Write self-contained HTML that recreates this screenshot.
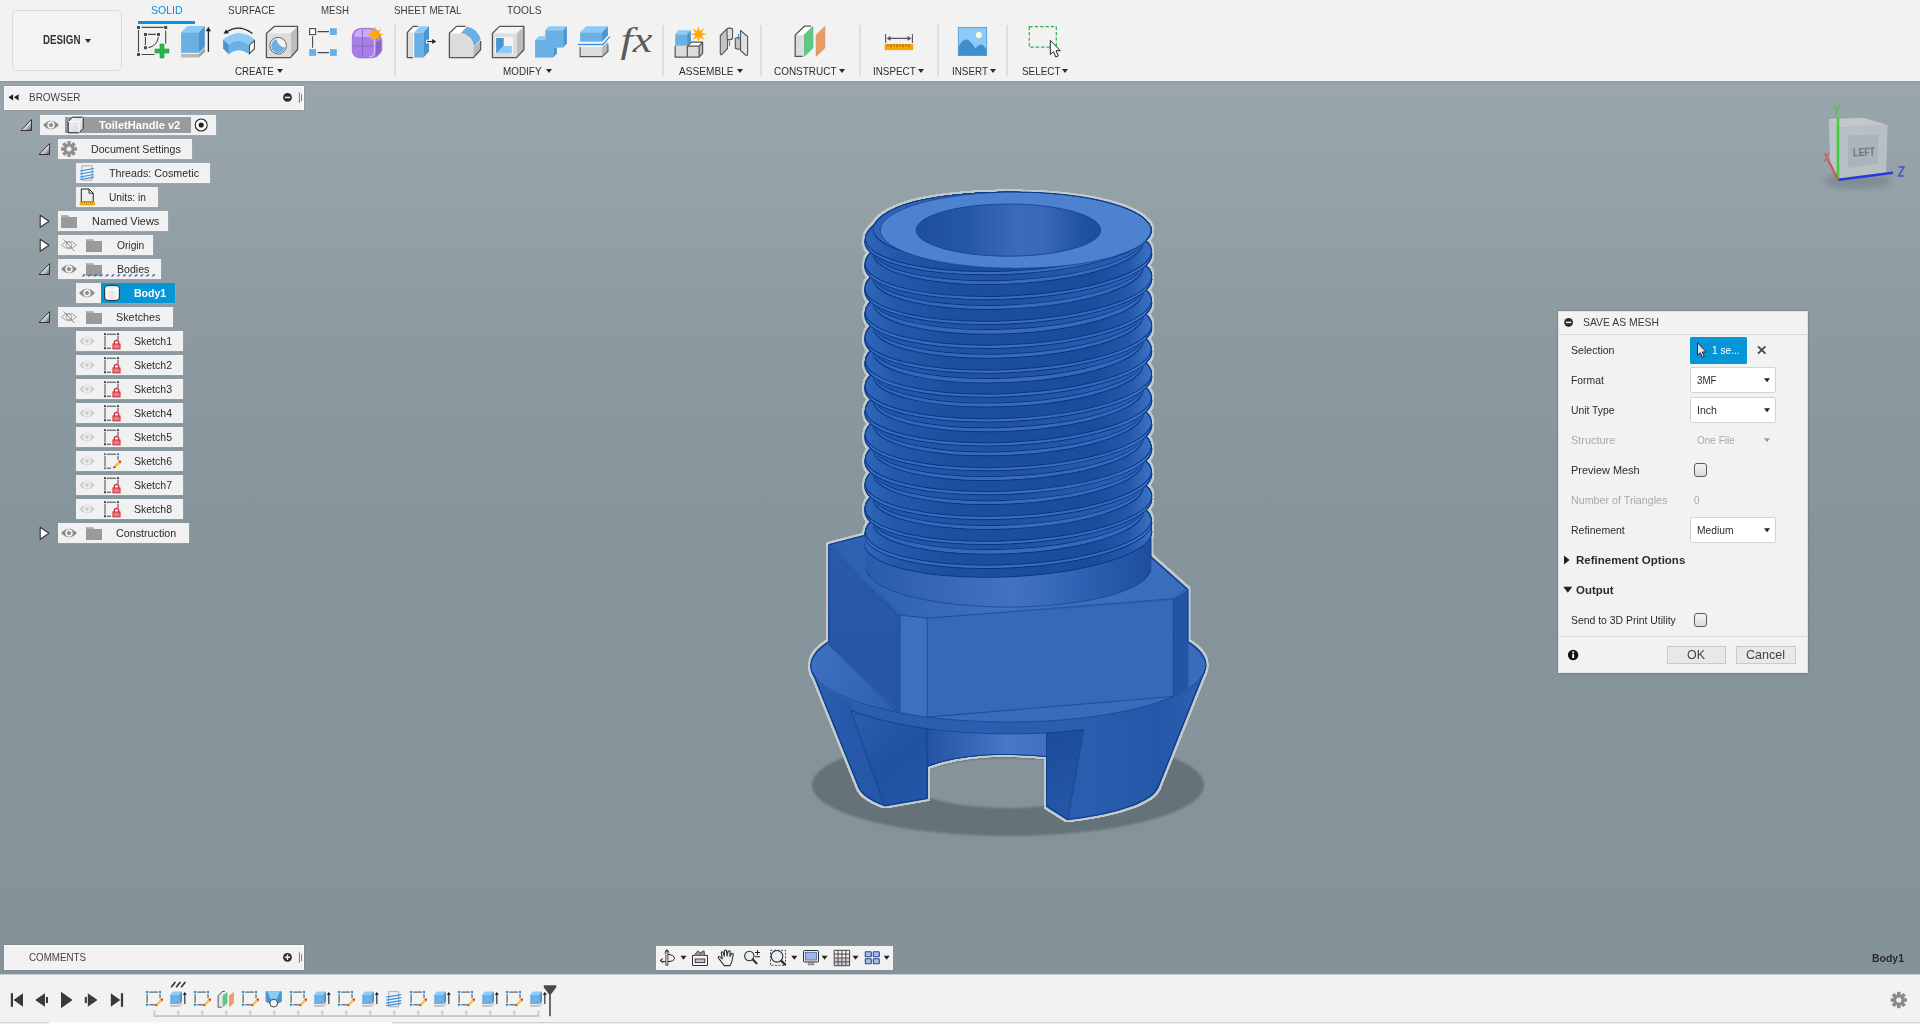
<!DOCTYPE html>
<html lang="en"><head><meta charset="utf-8"><title>Fusion 360 - ToiletHandle v2</title>
<style>
*{box-sizing:border-box;margin:0;padding:0}
html,body{width:1920px;height:1024px;overflow:hidden;background:#f2f2f2;font-family:"Liberation Sans",Arial,sans-serif;font-size:11px;color:#2a2a2a}
.abs{position:absolute}
#canvas{position:absolute;left:0;top:81px;width:1920px;height:894px;background:linear-gradient(#99a6ac 0%,#94a1a7 13%,#8e9ba1 25%,#89979e 38%,#86959c 50%,#84939a 100%);overflow:hidden}
#toolbar{position:absolute;left:0;top:0;width:1920px;height:81px;background:#f2f2f2}
#tshadow{position:absolute;left:0;top:81px;width:1920px;height:3px;background:linear-gradient(#8d9ba1,#98a6ac)}
#timeline{position:absolute;left:0;top:974px;width:1920px;height:50px;background:#f2f2f2;border-top:1.5px solid #c9cdcf}
.t{position:absolute;white-space:pre;transform-origin:0 50%;display:inline-block;line-height:14px;height:14px;font-size:11px;color:#2b2b2b}
.tab{font-size:11.5px;color:#3c3c3c}
.grp{font-size:11.5px;color:#2e2e2e}
.b{font-weight:700}
.sep{position:absolute;top:25px;width:2px;height:51px;background:#dedede}
.arr{position:absolute;width:0;height:0;border-left:3px solid transparent;border-right:3px solid transparent;border-top:4px solid #2a2a2a}
svg{position:absolute;overflow:visible}
.row{position:absolute;height:19.8px;background:#f1f1f1;box-shadow:0 0 1.5px .5px rgba(225,235,240,.3)}
.hl{position:absolute;background:#9b9b9b}
</style></head><body>
<style>
.dd{width:86px;height:26.6px;background:#fff;border:1.5px solid #d4d4d4;border-radius:2px}
.cb{width:13.2px;height:13.2px;border:1.3px solid #5a5a5a;border-radius:3px;background:linear-gradient(#f4f4f4,#dcdcdc)}
.btn{height:18.5px;background:#e8e8e8;border:1px solid #c9c9c9}
</style>
<div id="canvas"></div>
<svg id="model" width="1920" height="1024" viewBox="0 0 1920 1024" style="left:0;top:0">
<defs>
<filter id="blur1" x="-5%" y="-20%" width="110%" height="140%"><feGaussianBlur stdDeviation="1.1"/></filter>
<filter id="outl" x="-5%" y="-5%" width="110%" height="110%"><feMorphology in="SourceAlpha" operator="dilate" radius="1.6" result="d"/><feGaussianBlur in="d" stdDeviation=".5" result="b"/><feComponentTransfer in="b" result="a"><feFuncA type="linear" slope="2.6" intercept="-.5"/></feComponentTransfer><feFlood flood-color="#c3caca" result="f"/><feComposite in="f" in2="a" operator="in"/></filter>
<filter id="inl" x="-5%" y="-5%" width="110%" height="110%"><feMorphology in="SourceAlpha" operator="erode" radius=".8" result="e"/><feComposite in="SourceAlpha" in2="e" operator="out" result="ring"/><feFlood flood-color="#0b3d8d" result="f"/><feComposite in="f" in2="ring" operator="in" result="r2"/><feGaussianBlur in="r2" stdDeviation=".3"/></filter>
<linearGradient id="gHole" gradientUnits="userSpaceOnUse" x1="916" x2="1101" y1="0" y2="0"><stop offset="0" stop-color="#1d4e9d"/><stop offset="0.28" stop-color="#2658a8"/><stop offset="0.55" stop-color="#3a6bb8"/><stop offset="0.68" stop-color="#396ab7"/><stop offset="0.86" stop-color="#2456a6"/><stop offset="1" stop-color="#1c4d9c"/></linearGradient>
<linearGradient id="gSmooth" gradientUnits="userSpaceOnUse" x1="865" x2="1152" y1="0" y2="0"><stop offset="0" stop-color="#2a5cac"/><stop offset="0.3" stop-color="#3869b8"/><stop offset="0.52" stop-color="#4173c1"/><stop offset="0.75" stop-color="#2f62b2"/><stop offset="1" stop-color="#1d4e9e"/></linearGradient>
<linearGradient id="gU" gradientUnits="userSpaceOnUse" x1="865" x2="1152" y1="0" y2="0"><stop offset="0" stop-color="#3067b9"/><stop offset="0.1" stop-color="#2459a9"/><stop offset="0.3" stop-color="#1a509e"/><stop offset="0.8" stop-color="#184e9b"/><stop offset="0.92" stop-color="#2459a9"/><stop offset="1" stop-color="#3d73c5"/></linearGradient>
<linearGradient id="gC" gradientUnits="userSpaceOnUse" x1="865" x2="1152" y1="0" y2="0"><stop offset="0" stop-color="#3a70c2"/><stop offset="0.15" stop-color="#3868b7"/><stop offset="0.5" stop-color="#3c6cba"/><stop offset="0.85" stop-color="#3767b6"/><stop offset="1" stop-color="#4177c9"/></linearGradient>
<linearGradient id="gL" gradientUnits="userSpaceOnUse" x1="865" x2="1152" y1="0" y2="0"><stop offset="0" stop-color="#2259a9"/><stop offset="0.5" stop-color="#1f53a1"/><stop offset="1" stop-color="#2b62b4"/></linearGradient>
<linearGradient id="gR" gradientUnits="userSpaceOnUse" x1="865" x2="1152" y1="0" y2="0"><stop offset="0" stop-color="#2f64b5"/><stop offset="0.5" stop-color="#3b6bb9"/><stop offset="1" stop-color="#3468b9"/></linearGradient>
<linearGradient id="gBand" gradientUnits="userSpaceOnUse" x1="927" x2="1047" y1="0" y2="0"><stop offset="0" stop-color="#2354a4"/><stop offset="0.35" stop-color="#3566b5"/><stop offset="0.68" stop-color="#4878c7"/><stop offset="1" stop-color="#3f70bf"/></linearGradient>
<linearGradient id="gLegL" gradientUnits="userSpaceOnUse" x1="860" x2="930" y1="720" y2="800"><stop offset="0" stop-color="#2a5cac"/><stop offset="0.5" stop-color="#2052a2"/><stop offset="1" stop-color="#2457a7"/></linearGradient>
<linearGradient id="gLegR" gradientUnits="userSpaceOnUse" x1="1047" x2="1085" y1="735" y2="815"><stop offset="0" stop-color="#1c4d9c"/><stop offset="1" stop-color="#2658a8"/></linearGradient>
<linearGradient id="gCone" gradientUnits="userSpaceOnUse" x1="810" x2="1206" y1="0" y2="0"><stop offset="0" stop-color="#2c5fb0"/><stop offset="0.12" stop-color="#2558a8"/><stop offset="0.72" stop-color="#2a5dad"/><stop offset="0.88" stop-color="#2457a7"/><stop offset="1" stop-color="#2e62b3"/></linearGradient>
<linearGradient id="gFl" gradientUnits="userSpaceOnUse" x1="810" x2="900" y1="660" y2="700"><stop offset="0" stop-color="#3e71c0"/><stop offset="1" stop-color="#2c5fae"/></linearGradient>
<linearGradient id="gHexT" gradientUnits="userSpaceOnUse" x1="828" x2="1188" y1="0" y2="0"><stop offset="0" stop-color="#2d60b0"/><stop offset="0.2" stop-color="#3265b4"/><stop offset="0.5" stop-color="#3e71c0"/><stop offset="1" stop-color="#3a6dbc"/></linearGradient>
<linearGradient id="gHexL" gradientUnits="userSpaceOnUse" x1="0" x2="0" y1="544" y2="712"><stop offset="0" stop-color="#2a5ba9"/><stop offset="1" stop-color="#2355a3"/></linearGradient>
<clipPath id="cpTop"><path d="M850 620V230.5H864.8A143.5 38.7 0 0 1 1151.8 230.5H1166V620z"/></clipPath>
</defs>
<path filter="url(#blur1)" fill="#65727a" fill-rule="evenodd" d="M812 785a196 51 0 1 0 392 0a196 51 0 1 0 -392 0zM912 783a96.2 25 0 1 0 192.4 0a96.2 25 0 1 0 -192.4 0z"/>
<use href="#mdl" filter="url(#outl)"/>
<g id="mdl">
<path d="M810.4 665L812.9 674.6L858.6 788.4L860.8 791.7L862.9 794L865 795.9L867.2 797.5L869.4 798.9L871.5 800.2L873.6 801.4L875.8 802.4L878 803.4L880.1 804.4L882.2 805.3L884.4 806.1L927.2 798.6L927.2 766.8L940 762.6L955 759L970 756.7L986.3 755.3L1004 754.7L1021.7 755.2L1035 756L1046.5 757L1046.5 806.6L1067.7 820L1070.7 819.7L1073.7 819.3L1076.8 818.9L1079.8 818.5L1082.8 818L1085.8 817.6L1088.9 817.1L1091.9 816.6L1094.9 816L1097.9 815.4L1101 814.8L1104 814.2L1107 813.5L1110 812.8L1113.1 812.1L1116.1 811.3L1119.1 810.5L1122.1 809.6L1125.1 808.6L1128.2 807.6L1131.2 806.6L1134.2 805.4L1137.2 804.2L1140.3 802.8L1143.3 801.3L1146.3 799.6L1149.3 797.7L1152.4 795.4L1155.4 792.5L1158.4 788L1203.8 674.6L1206.4 665z" fill="url(#gCone)"/>
<path d="M850.9 710.3L856.4 712.4L861.8 714.3L867.2 716L872.7 717.6L878.1 719.1L883.6 720.5L889 721.8L894.5 723L900 724.1L905.4 725.2L910.9 726.1L916.3 727L921.8 727.9L927.2 728.6L927.2 798.6L884.4 806z" fill="url(#gLegL)" stroke="#143f8c" stroke-width=".7" stroke-linejoin="round"/>
<path d="M927.2 728.6L933.2 729.4L939.1 730.1L945.1 730.8L951.1 731.3L957 731.8L963 732.3L969 732.7L974.9 733L980.9 733.3L986.9 733.5L992.8 733.7L998.8 733.8L1004.7 733.9L1010.7 733.9L1016.7 733.8L1022.6 733.7L1028.6 733.6L1034.6 733.4L1040.5 733.1L1046.5 732.8L1046.5 757L1046.5 757L1035 756L1021.7 755.2L1004 754.7L986.3 755.3L970 756.7L955 759L940 762.6L927.2 766.8z" fill="url(#gBand)"/>
<path d="M1046.5 732.8L1051.1 732.5L1055.8 732.2L1060.4 731.8L1065 731.4L1069.7 731L1074.3 730.5L1079 730L1083.6 729.4L1067.7 819.9L1046.5 806.6z" fill="url(#gLegR)" stroke="#143f8c" stroke-width=".7" stroke-linejoin="round"/>
<path d="M927.2 727.5V798.6M1046.5 732.8V806.6" stroke="#143f8c" stroke-width=".7" fill="none"/>
<path d="M850.9 699.5L856.7 701.6L862.5 703.5L868.4 705.3L874.2 706.9L880 708.4L885.8 709.8L891.6 711L897.4 712.2L903.3 713.3L909.1 714.3L914.9 715.2L920.7 716.1L926.5 716.9L932.3 717.6L938.2 718.3L944 718.9L949.8 719.4L955.6 719.9L961.4 720.4L967.2 720.8L973.1 721.1L978.9 721.4L984.7 721.6L990.5 721.8L996.3 721.9L1002.2 722L1008 722L1013.8 722L1019.6 721.9L1025.4 721.8L1031.2 721.6L1037.1 721.4L1042.9 721.1L1048.7 720.8L1054.5 720.4L1060.3 720L1066.1 719.5L1072 719L1077.8 718.4L1083.6 717.7L1083.6 729.4L1077.8 730.1L1072 730.7L1066.1 731.3L1060.3 731.8L1054.5 732.3L1048.7 732.6L1042.9 733L1037.1 733.3L1031.2 733.5L1025.4 733.7L1019.6 733.8L1013.8 733.9L1008 733.9L1002.2 733.9L996.3 733.8L990.5 733.7L984.7 733.5L978.9 733.2L973.1 732.9L967.2 732.6L961.4 732.2L955.6 731.7L949.8 731.2L944 730.6L938.2 730L932.3 729.3L926.5 728.5L920.7 727.7L914.9 726.8L909.1 725.8L903.3 724.8L897.4 723.6L891.6 722.4L885.8 721L880 719.6L874.2 718L868.4 716.3L862.5 714.5L856.7 712.5L850.9 710.3z" fill="#2b5eaf"/>
<path d="M850.9 710.3L856.7 712.5L862.5 714.5L868.4 716.3L874.2 718L880 719.6L885.8 721L891.6 722.4L897.4 723.6L903.3 724.8L909.1 725.8L914.9 726.8L920.7 727.7L926.5 728.5L932.3 729.3L938.2 730L944 730.6L949.8 731.2L955.6 731.7L961.4 732.2L967.2 732.6L973.1 732.9L978.9 733.2L984.7 733.5L990.5 733.7L996.3 733.8L1002.2 733.9L1008 733.9L1013.8 733.9L1019.6 733.8L1025.4 733.7L1031.2 733.5L1037.1 733.3L1042.9 733L1048.7 732.6L1054.5 732.3L1060.3 731.8L1066.1 731.3L1072 730.7L1077.8 730.1L1083.6 729.4" fill="none" stroke="#143f8c" stroke-width=".7"/>
<path d="M810.4 665a198 57 0 1 0 396 0a198 57 0 1 0 -396 0z" fill="#396cbb"/>
<path d="M810.4 665a198 57 0 0 0 90 49L899.9 711.7L828.3 644Q812 655 810.4 665z" fill="url(#gFl)"/>
<path d="M812 672.2L818.5 681.2L825.1 686.5L831.6 690.7L838.2 694.1L844.7 697.1L851.3 699.7L857.8 702L864.4 704.1L870.9 706L877.5 707.8L884 709.3L890.6 710.8L897.1 712.1L903.7 713.4L910.2 714.5L916.7 715.5L923.3 716.5L929.8 717.3L936.4 718.1L942.9 718.8L949.5 719.4L956 720L962.6 720.5L969.1 720.9L975.7 721.2L982.2 721.5L988.8 721.7L995.3 721.9L1001.9 722L1008.4 722L1014.9 722L1021.5 721.9L1028 721.7L1034.6 721.5L1041.1 721.2L1047.7 720.9L1054.2 720.5L1060.8 720L1067.3 719.4L1073.9 718.8L1080.4 718.1L1087 717.3L1093.5 716.5L1100.1 715.5L1106.6 714.5L1113.1 713.4L1119.7 712.1L1126.2 710.8L1132.8 709.3L1139.3 707.8L1145.9 706L1152.4 704.1L1159 702L1165.5 699.7L1172.1 697.1L1178.6 694.1L1185.2 690.7L1191.7 686.5L1198.3 681.2L1204.8 672.2" fill="none" stroke="#143f8c" stroke-width=".7"/>
<path d="M828.3 544.2L866 534.5L1150.4 555.4L1188.4 589.3L1173.3 598.9L927.2 618.2L899.9 615z" fill="url(#gHexT)"/>
<path d="M828.3 544.2L899.9 615V711.7L828.3 644z" fill="url(#gHexL)"/>
<path d="M899.9 615L927.2 618.2V717.1L899.9 711.7z" fill="#3d70be"/>
<path d="M927.2 618.2L1173.3 598.9V696.5L927.2 717.1z" fill="#3669b7"/>
<path d="M1173.3 598.9L1188.4 589.3V687.5L1173.3 696.5z" fill="#2355a5"/>
<path d="M899.9 615V711.7M927.2 618.2V717.1M1173.3 598.9V696.5M927.2 618.2L1173.3 598.9M927.2 717.1L1173.3 696.5M828.3 644L897 711.7M899.9 615L927.2 618.2" stroke="#143f8c" stroke-width=".7" fill="none"/>
<path d="M865.3 537.5V568A143 39 0 0 0 1151.3 568V537.5z" fill="url(#gSmooth)"/>
<g clip-path="url(#cpTop)"><g transform="translate(1008.3 0) skewY(-2.44) translate(-1008.3 0)">
<ellipse cx="1008.3" cy="538" rx="143.5" ry="38.7" fill="url(#gU)" stroke="#08358a" stroke-width="1"/>
<ellipse cx="1008.3" cy="537.2" rx="143.5" ry="38.7" fill="url(#gU)"/>
<ellipse cx="1008.3" cy="536.4" rx="143.5" ry="38.7" fill="url(#gU)"/>
<ellipse cx="1008.3" cy="535.6" rx="143.5" ry="38.7" fill="url(#gU)"/>
<ellipse cx="1008.3" cy="534.8" rx="143.5" ry="38.7" fill="url(#gU)"/>
<ellipse cx="1008.3" cy="534" rx="143.5" ry="38.7" fill="url(#gU)"/>
<ellipse cx="1008.3" cy="533.2" rx="143.5" ry="38.7" fill="url(#gU)"/>
<ellipse cx="1008.3" cy="532.4" rx="143.5" ry="38.7" fill="url(#gU)"/>
<ellipse cx="1008.3" cy="531.6" rx="143.5" ry="38.7" fill="url(#gU)"/>
<ellipse cx="1008.3" cy="530.8" rx="143.5" ry="38.7" fill="url(#gU)"/>
<ellipse cx="1008.3" cy="530" rx="143.5" ry="38.7" fill="url(#gU)"/>
<ellipse cx="1008.3" cy="529.2" rx="143.5" ry="38.7" fill="url(#gC)" stroke="#08358a" stroke-width="1"/>
<ellipse cx="1008.3" cy="528.4" rx="143.5" ry="38.7" fill="url(#gC)"/>
<ellipse cx="1008.3" cy="527.6" rx="143.5" ry="38.7" fill="url(#gC)"/>
<ellipse cx="1008.3" cy="526.8" rx="143.5" ry="38.7" fill="url(#gC)"/>
<ellipse cx="1008.3" cy="526" rx="143" ry="38.6" fill="url(#gU)" stroke="#08358a" stroke-width="1"/>
<ellipse cx="1008.3" cy="525.2" rx="142.3" ry="38.4" fill="url(#gU)"/>
<ellipse cx="1008.3" cy="524.4" rx="141.6" ry="38.2" fill="url(#gU)"/>
<ellipse cx="1008.3" cy="523.6" rx="140.8" ry="38" fill="url(#gU)"/>
<ellipse cx="1008.3" cy="522.8" rx="140.1" ry="37.8" fill="url(#gU)"/>
<ellipse cx="1008.3" cy="522" rx="139.3" ry="37.6" fill="url(#gU)"/>
<ellipse cx="1008.3" cy="521.2" rx="138.6" ry="37.4" fill="url(#gU)"/>
<ellipse cx="1008.3" cy="520.4" rx="137.9" ry="37.2" fill="url(#gU)"/>
<ellipse cx="1008.3" cy="519.6" rx="137.1" ry="37" fill="url(#gU)"/>
<ellipse cx="1008.3" cy="518.8" rx="136.4" ry="36.8" fill="url(#gU)"/>
<ellipse cx="1008.3" cy="518" rx="135.6" ry="36.6" fill="url(#gU)"/>
<ellipse cx="1008.3" cy="517.2" rx="135" ry="36.5" fill="url(#gR)" stroke="#08358a" stroke-width="1"/>
<ellipse cx="1008.3" cy="516.4" rx="135" ry="36.5" fill="url(#gR)"/>
<ellipse cx="1008.3" cy="515.6" rx="135" ry="36.5" fill="url(#gR)"/>
<ellipse cx="1008.3" cy="514.8" rx="135" ry="36.5" fill="url(#gR)"/>
<ellipse cx="1008.3" cy="514" rx="135" ry="36.5" fill="url(#gR)"/>
<ellipse cx="1008.3" cy="513.2" rx="135" ry="36.5" fill="url(#gR)"/>
<ellipse cx="1008.3" cy="512.4" rx="135.7" ry="36.6" fill="url(#gL)" stroke="#08358a" stroke-width="1"/>
<ellipse cx="1008.3" cy="511.6" rx="136.6" ry="36.9" fill="url(#gL)"/>
<ellipse cx="1008.3" cy="510.8" rx="137.5" ry="37.1" fill="url(#gL)"/>
<ellipse cx="1008.3" cy="510" rx="138.3" ry="37.3" fill="url(#gL)"/>
<ellipse cx="1008.3" cy="509.2" rx="139.2" ry="37.6" fill="url(#gL)"/>
<ellipse cx="1008.3" cy="508.4" rx="140.1" ry="37.8" fill="url(#gL)"/>
<ellipse cx="1008.3" cy="507.6" rx="140.9" ry="38.1" fill="url(#gL)"/>
<ellipse cx="1008.3" cy="506.8" rx="141.8" ry="38.3" fill="url(#gL)"/>
<ellipse cx="1008.3" cy="506" rx="142.7" ry="38.5" fill="url(#gL)"/>
<ellipse cx="1008.3" cy="505.2" rx="143.5" ry="38.7" fill="url(#gC)" stroke="#08358a" stroke-width="1"/>
<ellipse cx="1008.3" cy="504.4" rx="143.5" ry="38.7" fill="url(#gC)"/>
<ellipse cx="1008.3" cy="503.6" rx="143.5" ry="38.7" fill="url(#gC)"/>
<ellipse cx="1008.3" cy="502.8" rx="143.5" ry="38.7" fill="url(#gC)"/>
<ellipse cx="1008.3" cy="502" rx="143.5" ry="38.7" fill="url(#gU)" stroke="#08358a" stroke-width="1"/>
<ellipse cx="1008.3" cy="501.2" rx="142.7" ry="38.5" fill="url(#gU)"/>
<ellipse cx="1008.3" cy="500.4" rx="142" ry="38.3" fill="url(#gU)"/>
<ellipse cx="1008.3" cy="499.6" rx="141.2" ry="38.1" fill="url(#gU)"/>
<ellipse cx="1008.3" cy="498.8" rx="140.5" ry="37.9" fill="url(#gU)"/>
<ellipse cx="1008.3" cy="498" rx="139.8" ry="37.7" fill="url(#gU)"/>
<ellipse cx="1008.3" cy="497.2" rx="139" ry="37.5" fill="url(#gU)"/>
<ellipse cx="1008.3" cy="496.4" rx="138.3" ry="37.3" fill="url(#gU)"/>
<ellipse cx="1008.3" cy="495.6" rx="137.5" ry="37.1" fill="url(#gU)"/>
<ellipse cx="1008.3" cy="494.8" rx="136.8" ry="36.9" fill="url(#gU)"/>
<ellipse cx="1008.3" cy="494" rx="136.1" ry="36.7" fill="url(#gU)"/>
<ellipse cx="1008.3" cy="493.2" rx="135.3" ry="36.5" fill="url(#gU)"/>
<ellipse cx="1008.3" cy="492.4" rx="135" ry="36.5" fill="url(#gR)" stroke="#08358a" stroke-width="1"/>
<ellipse cx="1008.3" cy="491.6" rx="135" ry="36.5" fill="url(#gR)"/>
<ellipse cx="1008.3" cy="490.8" rx="135" ry="36.5" fill="url(#gR)"/>
<ellipse cx="1008.3" cy="490" rx="135" ry="36.5" fill="url(#gR)"/>
<ellipse cx="1008.3" cy="489.2" rx="135" ry="36.5" fill="url(#gR)"/>
<ellipse cx="1008.3" cy="488.4" rx="135.2" ry="36.5" fill="url(#gL)" stroke="#08358a" stroke-width="1"/>
<ellipse cx="1008.3" cy="487.6" rx="136.1" ry="36.7" fill="url(#gL)"/>
<ellipse cx="1008.3" cy="486.8" rx="137" ry="37" fill="url(#gL)"/>
<ellipse cx="1008.3" cy="486" rx="137.8" ry="37.2" fill="url(#gL)"/>
<ellipse cx="1008.3" cy="485.2" rx="138.7" ry="37.5" fill="url(#gL)"/>
<ellipse cx="1008.3" cy="484.4" rx="139.6" ry="37.7" fill="url(#gL)"/>
<ellipse cx="1008.3" cy="483.6" rx="140.4" ry="37.9" fill="url(#gL)"/>
<ellipse cx="1008.3" cy="482.8" rx="141.3" ry="38.2" fill="url(#gL)"/>
<ellipse cx="1008.3" cy="482" rx="142.2" ry="38.4" fill="url(#gL)"/>
<ellipse cx="1008.3" cy="481.2" rx="143.1" ry="38.6" fill="url(#gL)"/>
<ellipse cx="1008.3" cy="480.4" rx="143.5" ry="38.7" fill="url(#gC)" stroke="#08358a" stroke-width="1"/>
<ellipse cx="1008.3" cy="479.6" rx="143.5" ry="38.7" fill="url(#gC)"/>
<ellipse cx="1008.3" cy="478.8" rx="143.5" ry="38.7" fill="url(#gC)"/>
<ellipse cx="1008.3" cy="478" rx="143.5" ry="38.7" fill="url(#gC)"/>
<ellipse cx="1008.3" cy="477.2" rx="143.1" ry="38.6" fill="url(#gU)" stroke="#08358a" stroke-width="1"/>
<ellipse cx="1008.3" cy="476.4" rx="142.4" ry="38.4" fill="url(#gU)"/>
<ellipse cx="1008.3" cy="475.6" rx="141.7" ry="38.2" fill="url(#gU)"/>
<ellipse cx="1008.3" cy="474.8" rx="140.9" ry="38" fill="url(#gU)"/>
<ellipse cx="1008.3" cy="474" rx="140.2" ry="37.8" fill="url(#gU)"/>
<ellipse cx="1008.3" cy="473.2" rx="139.4" ry="37.6" fill="url(#gU)"/>
<ellipse cx="1008.3" cy="472.4" rx="138.7" ry="37.4" fill="url(#gU)"/>
<ellipse cx="1008.3" cy="471.6" rx="138" ry="37.2" fill="url(#gU)"/>
<ellipse cx="1008.3" cy="470.8" rx="137.2" ry="37" fill="url(#gU)"/>
<ellipse cx="1008.3" cy="470" rx="136.5" ry="36.8" fill="url(#gU)"/>
<ellipse cx="1008.3" cy="469.2" rx="135.7" ry="36.6" fill="url(#gU)"/>
<ellipse cx="1008.3" cy="468.4" rx="135" ry="36.5" fill="url(#gU)"/>
<ellipse cx="1008.3" cy="467.6" rx="135" ry="36.5" fill="url(#gR)" stroke="#08358a" stroke-width="1"/>
<ellipse cx="1008.3" cy="466.8" rx="135" ry="36.5" fill="url(#gR)"/>
<ellipse cx="1008.3" cy="466" rx="135" ry="36.5" fill="url(#gR)"/>
<ellipse cx="1008.3" cy="465.2" rx="135" ry="36.5" fill="url(#gR)"/>
<ellipse cx="1008.3" cy="464.4" rx="135" ry="36.5" fill="url(#gR)"/>
<ellipse cx="1008.3" cy="463.6" rx="135.6" ry="36.6" fill="url(#gL)" stroke="#08358a" stroke-width="1"/>
<ellipse cx="1008.3" cy="462.8" rx="136.5" ry="36.8" fill="url(#gL)"/>
<ellipse cx="1008.3" cy="462" rx="137.3" ry="37.1" fill="url(#gL)"/>
<ellipse cx="1008.3" cy="461.2" rx="138.2" ry="37.3" fill="url(#gL)"/>
<ellipse cx="1008.3" cy="460.4" rx="139.1" ry="37.6" fill="url(#gL)"/>
<ellipse cx="1008.3" cy="459.6" rx="140" ry="37.8" fill="url(#gL)"/>
<ellipse cx="1008.3" cy="458.8" rx="140.8" ry="38" fill="url(#gL)"/>
<ellipse cx="1008.3" cy="458" rx="141.7" ry="38.3" fill="url(#gL)"/>
<ellipse cx="1008.3" cy="457.2" rx="142.6" ry="38.5" fill="url(#gL)"/>
<ellipse cx="1008.3" cy="456.4" rx="143.4" ry="38.7" fill="url(#gL)"/>
<ellipse cx="1008.3" cy="455.6" rx="143.5" ry="38.7" fill="url(#gC)" stroke="#08358a" stroke-width="1"/>
<ellipse cx="1008.3" cy="454.8" rx="143.5" ry="38.7" fill="url(#gC)"/>
<ellipse cx="1008.3" cy="454" rx="143.5" ry="38.7" fill="url(#gC)"/>
<ellipse cx="1008.3" cy="453.2" rx="143.5" ry="38.7" fill="url(#gC)"/>
<ellipse cx="1008.3" cy="452.4" rx="142.8" ry="38.6" fill="url(#gU)" stroke="#08358a" stroke-width="1"/>
<ellipse cx="1008.3" cy="451.6" rx="142.1" ry="38.4" fill="url(#gU)"/>
<ellipse cx="1008.3" cy="450.8" rx="141.3" ry="38.2" fill="url(#gU)"/>
<ellipse cx="1008.3" cy="450" rx="140.6" ry="38" fill="url(#gU)"/>
<ellipse cx="1008.3" cy="449.2" rx="139.9" ry="37.8" fill="url(#gU)"/>
<ellipse cx="1008.3" cy="448.4" rx="139.1" ry="37.6" fill="url(#gU)"/>
<ellipse cx="1008.3" cy="447.6" rx="138.4" ry="37.4" fill="url(#gU)"/>
<ellipse cx="1008.3" cy="446.8" rx="137.6" ry="37.2" fill="url(#gU)"/>
<ellipse cx="1008.3" cy="446" rx="136.9" ry="37" fill="url(#gU)"/>
<ellipse cx="1008.3" cy="445.2" rx="136.2" ry="36.8" fill="url(#gU)"/>
<ellipse cx="1008.3" cy="444.4" rx="135.4" ry="36.6" fill="url(#gU)"/>
<ellipse cx="1008.3" cy="443.6" rx="135" ry="36.5" fill="url(#gR)" stroke="#08358a" stroke-width="1"/>
<ellipse cx="1008.3" cy="442.8" rx="135" ry="36.5" fill="url(#gR)"/>
<ellipse cx="1008.3" cy="442" rx="135" ry="36.5" fill="url(#gR)"/>
<ellipse cx="1008.3" cy="441.2" rx="135" ry="36.5" fill="url(#gR)"/>
<ellipse cx="1008.3" cy="440.4" rx="135" ry="36.5" fill="url(#gR)"/>
<ellipse cx="1008.3" cy="439.6" rx="135.1" ry="36.5" fill="url(#gL)" stroke="#08358a" stroke-width="1"/>
<ellipse cx="1008.3" cy="438.8" rx="136" ry="36.7" fill="url(#gL)"/>
<ellipse cx="1008.3" cy="438" rx="136.9" ry="37" fill="url(#gL)"/>
<ellipse cx="1008.3" cy="437.2" rx="137.7" ry="37.2" fill="url(#gL)"/>
<ellipse cx="1008.3" cy="436.4" rx="138.6" ry="37.4" fill="url(#gL)"/>
<ellipse cx="1008.3" cy="435.6" rx="139.5" ry="37.7" fill="url(#gL)"/>
<ellipse cx="1008.3" cy="434.8" rx="140.3" ry="37.9" fill="url(#gL)"/>
<ellipse cx="1008.3" cy="434" rx="141.2" ry="38.1" fill="url(#gL)"/>
<ellipse cx="1008.3" cy="433.2" rx="142.1" ry="38.4" fill="url(#gL)"/>
<ellipse cx="1008.3" cy="432.4" rx="143" ry="38.6" fill="url(#gL)"/>
<ellipse cx="1008.3" cy="431.6" rx="143.5" ry="38.7" fill="url(#gC)" stroke="#08358a" stroke-width="1"/>
<ellipse cx="1008.3" cy="430.8" rx="143.5" ry="38.7" fill="url(#gC)"/>
<ellipse cx="1008.3" cy="430" rx="143.5" ry="38.7" fill="url(#gC)"/>
<ellipse cx="1008.3" cy="429.2" rx="143.5" ry="38.7" fill="url(#gC)"/>
<ellipse cx="1008.3" cy="428.4" rx="143.2" ry="38.7" fill="url(#gU)" stroke="#08358a" stroke-width="1"/>
<ellipse cx="1008.3" cy="427.6" rx="142.5" ry="38.5" fill="url(#gU)"/>
<ellipse cx="1008.3" cy="426.8" rx="141.7" ry="38.3" fill="url(#gU)"/>
<ellipse cx="1008.3" cy="426" rx="141" ry="38.1" fill="url(#gU)"/>
<ellipse cx="1008.3" cy="425.2" rx="140.3" ry="37.9" fill="url(#gU)"/>
<ellipse cx="1008.3" cy="424.4" rx="139.5" ry="37.7" fill="url(#gU)"/>
<ellipse cx="1008.3" cy="423.6" rx="138.8" ry="37.5" fill="url(#gU)"/>
<ellipse cx="1008.3" cy="422.8" rx="138" ry="37.3" fill="url(#gU)"/>
<ellipse cx="1008.3" cy="422" rx="137.3" ry="37.1" fill="url(#gU)"/>
<ellipse cx="1008.3" cy="421.2" rx="136.6" ry="36.9" fill="url(#gU)"/>
<ellipse cx="1008.3" cy="420.4" rx="135.8" ry="36.7" fill="url(#gU)"/>
<ellipse cx="1008.3" cy="419.6" rx="135.1" ry="36.5" fill="url(#gU)"/>
<ellipse cx="1008.3" cy="418.8" rx="135" ry="36.5" fill="url(#gR)" stroke="#08358a" stroke-width="1"/>
<ellipse cx="1008.3" cy="418" rx="135" ry="36.5" fill="url(#gR)"/>
<ellipse cx="1008.3" cy="417.2" rx="135" ry="36.5" fill="url(#gR)"/>
<ellipse cx="1008.3" cy="416.4" rx="135" ry="36.5" fill="url(#gR)"/>
<ellipse cx="1008.3" cy="415.6" rx="135" ry="36.5" fill="url(#gR)"/>
<ellipse cx="1008.3" cy="414.8" rx="135.5" ry="36.6" fill="url(#gL)" stroke="#08358a" stroke-width="1"/>
<ellipse cx="1008.3" cy="414" rx="136.4" ry="36.8" fill="url(#gL)"/>
<ellipse cx="1008.3" cy="413.2" rx="137.2" ry="37.1" fill="url(#gL)"/>
<ellipse cx="1008.3" cy="412.4" rx="138.1" ry="37.3" fill="url(#gL)"/>
<ellipse cx="1008.3" cy="411.6" rx="139" ry="37.5" fill="url(#gL)"/>
<ellipse cx="1008.3" cy="410.8" rx="139.8" ry="37.8" fill="url(#gL)"/>
<ellipse cx="1008.3" cy="410" rx="140.7" ry="38" fill="url(#gL)"/>
<ellipse cx="1008.3" cy="409.2" rx="141.6" ry="38.2" fill="url(#gL)"/>
<ellipse cx="1008.3" cy="408.4" rx="142.5" ry="38.5" fill="url(#gL)"/>
<ellipse cx="1008.3" cy="407.6" rx="143.3" ry="38.7" fill="url(#gL)"/>
<ellipse cx="1008.3" cy="406.8" rx="143.5" ry="38.7" fill="url(#gC)" stroke="#08358a" stroke-width="1"/>
<ellipse cx="1008.3" cy="406" rx="143.5" ry="38.7" fill="url(#gC)"/>
<ellipse cx="1008.3" cy="405.2" rx="143.5" ry="38.7" fill="url(#gC)"/>
<ellipse cx="1008.3" cy="404.4" rx="143.5" ry="38.7" fill="url(#gC)"/>
<ellipse cx="1008.3" cy="403.6" rx="142.9" ry="38.6" fill="url(#gU)" stroke="#08358a" stroke-width="1"/>
<ellipse cx="1008.3" cy="402.8" rx="142.2" ry="38.4" fill="url(#gU)"/>
<ellipse cx="1008.3" cy="402" rx="141.4" ry="38.2" fill="url(#gU)"/>
<ellipse cx="1008.3" cy="401.2" rx="140.7" ry="38" fill="url(#gU)"/>
<ellipse cx="1008.3" cy="400.4" rx="139.9" ry="37.8" fill="url(#gU)"/>
<ellipse cx="1008.3" cy="399.6" rx="139.2" ry="37.6" fill="url(#gU)"/>
<ellipse cx="1008.3" cy="398.8" rx="138.5" ry="37.4" fill="url(#gU)"/>
<ellipse cx="1008.3" cy="398" rx="137.7" ry="37.2" fill="url(#gU)"/>
<ellipse cx="1008.3" cy="397.2" rx="137" ry="37" fill="url(#gU)"/>
<ellipse cx="1008.3" cy="396.4" rx="136.2" ry="36.8" fill="url(#gU)"/>
<ellipse cx="1008.3" cy="395.6" rx="135.5" ry="36.6" fill="url(#gU)"/>
<ellipse cx="1008.3" cy="394.8" rx="135" ry="36.5" fill="url(#gR)" stroke="#08358a" stroke-width="1"/>
<ellipse cx="1008.3" cy="394" rx="135" ry="36.5" fill="url(#gR)"/>
<ellipse cx="1008.3" cy="393.2" rx="135" ry="36.5" fill="url(#gR)"/>
<ellipse cx="1008.3" cy="392.4" rx="135" ry="36.5" fill="url(#gR)"/>
<ellipse cx="1008.3" cy="391.6" rx="135" ry="36.5" fill="url(#gR)"/>
<ellipse cx="1008.3" cy="390.8" rx="135" ry="36.5" fill="url(#gL)" stroke="#08358a" stroke-width="1"/>
<ellipse cx="1008.3" cy="390" rx="135.9" ry="36.7" fill="url(#gL)"/>
<ellipse cx="1008.3" cy="389.2" rx="136.7" ry="36.9" fill="url(#gL)"/>
<ellipse cx="1008.3" cy="388.4" rx="137.6" ry="37.2" fill="url(#gL)"/>
<ellipse cx="1008.3" cy="387.6" rx="138.5" ry="37.4" fill="url(#gL)"/>
<ellipse cx="1008.3" cy="386.8" rx="139.4" ry="37.6" fill="url(#gL)"/>
<ellipse cx="1008.3" cy="386" rx="140.2" ry="37.9" fill="url(#gL)"/>
<ellipse cx="1008.3" cy="385.2" rx="141.1" ry="38.1" fill="url(#gL)"/>
<ellipse cx="1008.3" cy="384.4" rx="142" ry="38.3" fill="url(#gL)"/>
<ellipse cx="1008.3" cy="383.6" rx="142.8" ry="38.6" fill="url(#gL)"/>
<ellipse cx="1008.3" cy="382.8" rx="143.5" ry="38.7" fill="url(#gC)" stroke="#08358a" stroke-width="1"/>
<ellipse cx="1008.3" cy="382" rx="143.5" ry="38.7" fill="url(#gC)"/>
<ellipse cx="1008.3" cy="381.2" rx="143.5" ry="38.7" fill="url(#gC)"/>
<ellipse cx="1008.3" cy="380.4" rx="143.5" ry="38.7" fill="url(#gC)"/>
<ellipse cx="1008.3" cy="379.6" rx="143.3" ry="38.7" fill="url(#gU)" stroke="#08358a" stroke-width="1"/>
<ellipse cx="1008.3" cy="378.8" rx="142.6" ry="38.5" fill="url(#gU)"/>
<ellipse cx="1008.3" cy="378" rx="141.8" ry="38.3" fill="url(#gU)"/>
<ellipse cx="1008.3" cy="377.2" rx="141.1" ry="38.1" fill="url(#gU)"/>
<ellipse cx="1008.3" cy="376.4" rx="140.4" ry="37.9" fill="url(#gU)"/>
<ellipse cx="1008.3" cy="375.6" rx="139.6" ry="37.7" fill="url(#gU)"/>
<ellipse cx="1008.3" cy="374.8" rx="138.9" ry="37.5" fill="url(#gU)"/>
<ellipse cx="1008.3" cy="374" rx="138.1" ry="37.3" fill="url(#gU)"/>
<ellipse cx="1008.3" cy="373.2" rx="137.4" ry="37.1" fill="url(#gU)"/>
<ellipse cx="1008.3" cy="372.4" rx="136.7" ry="36.9" fill="url(#gU)"/>
<ellipse cx="1008.3" cy="371.6" rx="135.9" ry="36.7" fill="url(#gU)"/>
<ellipse cx="1008.3" cy="370.8" rx="135.2" ry="36.5" fill="url(#gU)"/>
<ellipse cx="1008.3" cy="370" rx="135" ry="36.5" fill="url(#gR)" stroke="#08358a" stroke-width="1"/>
<ellipse cx="1008.3" cy="369.2" rx="135" ry="36.5" fill="url(#gR)"/>
<ellipse cx="1008.3" cy="368.4" rx="135" ry="36.5" fill="url(#gR)"/>
<ellipse cx="1008.3" cy="367.6" rx="135" ry="36.5" fill="url(#gR)"/>
<ellipse cx="1008.3" cy="366.8" rx="135" ry="36.5" fill="url(#gR)"/>
<ellipse cx="1008.3" cy="366" rx="135.4" ry="36.6" fill="url(#gL)" stroke="#08358a" stroke-width="1"/>
<ellipse cx="1008.3" cy="365.2" rx="136.3" ry="36.8" fill="url(#gL)"/>
<ellipse cx="1008.3" cy="364.4" rx="137.1" ry="37" fill="url(#gL)"/>
<ellipse cx="1008.3" cy="363.6" rx="138" ry="37.3" fill="url(#gL)"/>
<ellipse cx="1008.3" cy="362.8" rx="138.9" ry="37.5" fill="url(#gL)"/>
<ellipse cx="1008.3" cy="362" rx="139.7" ry="37.7" fill="url(#gL)"/>
<ellipse cx="1008.3" cy="361.2" rx="140.6" ry="38" fill="url(#gL)"/>
<ellipse cx="1008.3" cy="360.4" rx="141.5" ry="38.2" fill="url(#gL)"/>
<ellipse cx="1008.3" cy="359.6" rx="142.4" ry="38.4" fill="url(#gL)"/>
<ellipse cx="1008.3" cy="358.8" rx="143.2" ry="38.7" fill="url(#gL)"/>
<ellipse cx="1008.3" cy="358" rx="143.5" ry="38.7" fill="url(#gC)" stroke="#08358a" stroke-width="1"/>
<ellipse cx="1008.3" cy="357.2" rx="143.5" ry="38.7" fill="url(#gC)"/>
<ellipse cx="1008.3" cy="356.4" rx="143.5" ry="38.7" fill="url(#gC)"/>
<ellipse cx="1008.3" cy="355.6" rx="143.5" ry="38.7" fill="url(#gC)"/>
<ellipse cx="1008.3" cy="354.8" rx="143" ry="38.6" fill="url(#gU)" stroke="#08358a" stroke-width="1"/>
<ellipse cx="1008.3" cy="354" rx="142.3" ry="38.4" fill="url(#gU)"/>
<ellipse cx="1008.3" cy="353.2" rx="141.5" ry="38.2" fill="url(#gU)"/>
<ellipse cx="1008.3" cy="352.4" rx="140.8" ry="38" fill="url(#gU)"/>
<ellipse cx="1008.3" cy="351.6" rx="140" ry="37.8" fill="url(#gU)"/>
<ellipse cx="1008.3" cy="350.8" rx="139.3" ry="37.6" fill="url(#gU)"/>
<ellipse cx="1008.3" cy="350" rx="138.6" ry="37.4" fill="url(#gU)"/>
<ellipse cx="1008.3" cy="349.2" rx="137.8" ry="37.2" fill="url(#gU)"/>
<ellipse cx="1008.3" cy="348.4" rx="137.1" ry="37" fill="url(#gU)"/>
<ellipse cx="1008.3" cy="347.6" rx="136.3" ry="36.8" fill="url(#gU)"/>
<ellipse cx="1008.3" cy="346.8" rx="135.6" ry="36.6" fill="url(#gU)"/>
<ellipse cx="1008.3" cy="346" rx="135" ry="36.5" fill="url(#gR)" stroke="#08358a" stroke-width="1"/>
<ellipse cx="1008.3" cy="345.2" rx="135" ry="36.5" fill="url(#gR)"/>
<ellipse cx="1008.3" cy="344.4" rx="135" ry="36.5" fill="url(#gR)"/>
<ellipse cx="1008.3" cy="343.6" rx="135" ry="36.5" fill="url(#gR)"/>
<ellipse cx="1008.3" cy="342.8" rx="135" ry="36.5" fill="url(#gR)"/>
<ellipse cx="1008.3" cy="342" rx="135" ry="36.5" fill="url(#gR)"/>
<ellipse cx="1008.3" cy="341.2" rx="135.8" ry="36.7" fill="url(#gL)" stroke="#08358a" stroke-width="1"/>
<ellipse cx="1008.3" cy="340.4" rx="136.6" ry="36.9" fill="url(#gL)"/>
<ellipse cx="1008.3" cy="339.6" rx="137.5" ry="37.1" fill="url(#gL)"/>
<ellipse cx="1008.3" cy="338.8" rx="138.4" ry="37.4" fill="url(#gL)"/>
<ellipse cx="1008.3" cy="338" rx="139.3" ry="37.6" fill="url(#gL)"/>
<ellipse cx="1008.3" cy="337.2" rx="140.1" ry="37.8" fill="url(#gL)"/>
<ellipse cx="1008.3" cy="336.4" rx="141" ry="38.1" fill="url(#gL)"/>
<ellipse cx="1008.3" cy="335.6" rx="141.9" ry="38.3" fill="url(#gL)"/>
<ellipse cx="1008.3" cy="334.8" rx="142.7" ry="38.5" fill="url(#gL)"/>
<ellipse cx="1008.3" cy="334" rx="143.5" ry="38.7" fill="url(#gC)" stroke="#08358a" stroke-width="1"/>
<ellipse cx="1008.3" cy="333.2" rx="143.5" ry="38.7" fill="url(#gC)"/>
<ellipse cx="1008.3" cy="332.4" rx="143.5" ry="38.7" fill="url(#gC)"/>
<ellipse cx="1008.3" cy="331.6" rx="143.5" ry="38.7" fill="url(#gC)"/>
<ellipse cx="1008.3" cy="330.8" rx="143.4" ry="38.7" fill="url(#gU)" stroke="#08358a" stroke-width="1"/>
<ellipse cx="1008.3" cy="330" rx="142.7" ry="38.5" fill="url(#gU)"/>
<ellipse cx="1008.3" cy="329.2" rx="141.9" ry="38.3" fill="url(#gU)"/>
<ellipse cx="1008.3" cy="328.4" rx="141.2" ry="38.1" fill="url(#gU)"/>
<ellipse cx="1008.3" cy="327.6" rx="140.5" ry="37.9" fill="url(#gU)"/>
<ellipse cx="1008.3" cy="326.8" rx="139.7" ry="37.7" fill="url(#gU)"/>
<ellipse cx="1008.3" cy="326" rx="139" ry="37.5" fill="url(#gU)"/>
<ellipse cx="1008.3" cy="325.2" rx="138.2" ry="37.3" fill="url(#gU)"/>
<ellipse cx="1008.3" cy="324.4" rx="137.5" ry="37.1" fill="url(#gU)"/>
<ellipse cx="1008.3" cy="323.6" rx="136.8" ry="36.9" fill="url(#gU)"/>
<ellipse cx="1008.3" cy="322.8" rx="136" ry="36.7" fill="url(#gU)"/>
<ellipse cx="1008.3" cy="322" rx="135.3" ry="36.5" fill="url(#gU)"/>
<ellipse cx="1008.3" cy="321.2" rx="135" ry="36.5" fill="url(#gR)" stroke="#08358a" stroke-width="1"/>
<ellipse cx="1008.3" cy="320.4" rx="135" ry="36.5" fill="url(#gR)"/>
<ellipse cx="1008.3" cy="319.6" rx="135" ry="36.5" fill="url(#gR)"/>
<ellipse cx="1008.3" cy="318.8" rx="135" ry="36.5" fill="url(#gR)"/>
<ellipse cx="1008.3" cy="318" rx="135" ry="36.5" fill="url(#gR)"/>
<ellipse cx="1008.3" cy="317.2" rx="135.3" ry="36.5" fill="url(#gL)" stroke="#08358a" stroke-width="1"/>
<ellipse cx="1008.3" cy="316.4" rx="136.1" ry="36.8" fill="url(#gL)"/>
<ellipse cx="1008.3" cy="315.6" rx="137" ry="37" fill="url(#gL)"/>
<ellipse cx="1008.3" cy="314.8" rx="137.9" ry="37.2" fill="url(#gL)"/>
<ellipse cx="1008.3" cy="314" rx="138.8" ry="37.5" fill="url(#gL)"/>
<ellipse cx="1008.3" cy="313.2" rx="139.6" ry="37.7" fill="url(#gL)"/>
<ellipse cx="1008.3" cy="312.4" rx="140.5" ry="37.9" fill="url(#gL)"/>
<ellipse cx="1008.3" cy="311.6" rx="141.4" ry="38.2" fill="url(#gL)"/>
<ellipse cx="1008.3" cy="310.8" rx="142.2" ry="38.4" fill="url(#gL)"/>
<ellipse cx="1008.3" cy="310" rx="143.1" ry="38.6" fill="url(#gL)"/>
<ellipse cx="1008.3" cy="309.2" rx="143.5" ry="38.7" fill="url(#gC)" stroke="#08358a" stroke-width="1"/>
<ellipse cx="1008.3" cy="308.4" rx="143.5" ry="38.7" fill="url(#gC)"/>
<ellipse cx="1008.3" cy="307.6" rx="143.5" ry="38.7" fill="url(#gC)"/>
<ellipse cx="1008.3" cy="306.8" rx="143.5" ry="38.7" fill="url(#gC)"/>
<ellipse cx="1008.3" cy="306" rx="143.1" ry="38.6" fill="url(#gU)" stroke="#08358a" stroke-width="1"/>
<ellipse cx="1008.3" cy="305.2" rx="142.3" ry="38.4" fill="url(#gU)"/>
<ellipse cx="1008.3" cy="304.4" rx="141.6" ry="38.2" fill="url(#gU)"/>
<ellipse cx="1008.3" cy="303.6" rx="140.9" ry="38" fill="url(#gU)"/>
<ellipse cx="1008.3" cy="302.8" rx="140.1" ry="37.8" fill="url(#gU)"/>
<ellipse cx="1008.3" cy="302" rx="139.4" ry="37.6" fill="url(#gU)"/>
<ellipse cx="1008.3" cy="301.2" rx="138.6" ry="37.4" fill="url(#gU)"/>
<ellipse cx="1008.3" cy="300.4" rx="137.9" ry="37.2" fill="url(#gU)"/>
<ellipse cx="1008.3" cy="299.6" rx="137.2" ry="37" fill="url(#gU)"/>
<ellipse cx="1008.3" cy="298.8" rx="136.4" ry="36.8" fill="url(#gU)"/>
<ellipse cx="1008.3" cy="298" rx="135.7" ry="36.6" fill="url(#gU)"/>
<ellipse cx="1008.3" cy="297.2" rx="135" ry="36.5" fill="url(#gR)" stroke="#08358a" stroke-width="1"/>
<ellipse cx="1008.3" cy="296.4" rx="135" ry="36.5" fill="url(#gR)"/>
<ellipse cx="1008.3" cy="295.6" rx="135" ry="36.5" fill="url(#gR)"/>
<ellipse cx="1008.3" cy="294.8" rx="135" ry="36.5" fill="url(#gR)"/>
<ellipse cx="1008.3" cy="294" rx="135" ry="36.5" fill="url(#gR)"/>
<ellipse cx="1008.3" cy="293.2" rx="135" ry="36.5" fill="url(#gR)"/>
<ellipse cx="1008.3" cy="292.4" rx="135.7" ry="36.6" fill="url(#gL)" stroke="#08358a" stroke-width="1"/>
<ellipse cx="1008.3" cy="291.6" rx="136.5" ry="36.9" fill="url(#gL)"/>
<ellipse cx="1008.3" cy="290.8" rx="137.4" ry="37.1" fill="url(#gL)"/>
<ellipse cx="1008.3" cy="290" rx="138.3" ry="37.3" fill="url(#gL)"/>
<ellipse cx="1008.3" cy="289.2" rx="139.1" ry="37.6" fill="url(#gL)"/>
<ellipse cx="1008.3" cy="288.4" rx="140" ry="37.8" fill="url(#gL)"/>
<ellipse cx="1008.3" cy="287.6" rx="140.9" ry="38" fill="url(#gL)"/>
<ellipse cx="1008.3" cy="286.8" rx="141.8" ry="38.3" fill="url(#gL)"/>
<ellipse cx="1008.3" cy="286" rx="142.6" ry="38.5" fill="url(#gL)"/>
<ellipse cx="1008.3" cy="285.2" rx="143.5" ry="38.7" fill="url(#gC)" stroke="#08358a" stroke-width="1"/>
<ellipse cx="1008.3" cy="284.4" rx="143.5" ry="38.7" fill="url(#gC)"/>
<ellipse cx="1008.3" cy="283.6" rx="143.5" ry="38.7" fill="url(#gC)"/>
<ellipse cx="1008.3" cy="282.8" rx="143.5" ry="38.7" fill="url(#gC)"/>
<ellipse cx="1008.3" cy="282" rx="143.5" ry="38.7" fill="url(#gU)" stroke="#08358a" stroke-width="1"/>
<ellipse cx="1008.3" cy="281.2" rx="142.8" ry="38.5" fill="url(#gU)"/>
<ellipse cx="1008.3" cy="280.4" rx="142" ry="38.3" fill="url(#gU)"/>
<ellipse cx="1008.3" cy="279.6" rx="141.3" ry="38.1" fill="url(#gU)"/>
<ellipse cx="1008.3" cy="278.8" rx="140.5" ry="37.9" fill="url(#gU)"/>
<ellipse cx="1008.3" cy="278" rx="139.8" ry="37.7" fill="url(#gU)"/>
<ellipse cx="1008.3" cy="277.2" rx="139.1" ry="37.5" fill="url(#gU)"/>
<ellipse cx="1008.3" cy="276.4" rx="138.3" ry="37.3" fill="url(#gU)"/>
<ellipse cx="1008.3" cy="275.6" rx="137.6" ry="37.1" fill="url(#gU)"/>
<ellipse cx="1008.3" cy="274.8" rx="136.8" ry="36.9" fill="url(#gU)"/>
<ellipse cx="1008.3" cy="274" rx="136.1" ry="36.7" fill="url(#gU)"/>
<ellipse cx="1008.3" cy="273.2" rx="135.4" ry="36.5" fill="url(#gU)"/>
<ellipse cx="1008.3" cy="272.4" rx="135" ry="36.5" fill="url(#gR)" stroke="#08358a" stroke-width="1"/>
<ellipse cx="1008.3" cy="271.6" rx="135" ry="36.5" fill="url(#gR)"/>
<ellipse cx="1008.3" cy="270.8" rx="135" ry="36.5" fill="url(#gR)"/>
<ellipse cx="1008.3" cy="270" rx="135" ry="36.5" fill="url(#gR)"/>
<ellipse cx="1008.3" cy="269.2" rx="135" ry="36.5" fill="url(#gR)"/>
<ellipse cx="1008.3" cy="268.4" rx="135.2" ry="36.5" fill="url(#gL)" stroke="#08358a" stroke-width="1"/>
<ellipse cx="1008.3" cy="267.6" rx="136" ry="36.7" fill="url(#gL)"/>
<ellipse cx="1008.3" cy="266.8" rx="136.9" ry="37" fill="url(#gL)"/>
<ellipse cx="1008.3" cy="266" rx="137.8" ry="37.2" fill="url(#gL)"/>
<ellipse cx="1008.3" cy="265.2" rx="138.7" ry="37.4" fill="url(#gL)"/>
<ellipse cx="1008.3" cy="264.4" rx="139.5" ry="37.7" fill="url(#gL)"/>
<ellipse cx="1008.3" cy="263.6" rx="140.4" ry="37.9" fill="url(#gL)"/>
<ellipse cx="1008.3" cy="262.8" rx="141.3" ry="38.1" fill="url(#gL)"/>
<ellipse cx="1008.3" cy="262" rx="142.1" ry="38.4" fill="url(#gL)"/>
<ellipse cx="1008.3" cy="261.2" rx="143" ry="38.6" fill="url(#gL)"/>
<ellipse cx="1008.3" cy="260.4" rx="143.5" ry="38.7" fill="url(#gC)" stroke="#08358a" stroke-width="1"/>
<ellipse cx="1008.3" cy="259.6" rx="143.5" ry="38.7" fill="url(#gC)"/>
<ellipse cx="1008.3" cy="258.8" rx="143.5" ry="38.7" fill="url(#gC)"/>
<ellipse cx="1008.3" cy="258" rx="143.5" ry="38.7" fill="url(#gC)"/>
<ellipse cx="1008.3" cy="257.2" rx="143.2" ry="38.7" fill="url(#gU)" stroke="#08358a" stroke-width="1"/>
<ellipse cx="1008.3" cy="256.4" rx="142.4" ry="38.5" fill="url(#gU)"/>
<ellipse cx="1008.3" cy="255.6" rx="141.7" ry="38.3" fill="url(#gU)"/>
<ellipse cx="1008.3" cy="254.8" rx="141" ry="38.1" fill="url(#gU)"/>
<ellipse cx="1008.3" cy="254" rx="140.2" ry="37.9" fill="url(#gU)"/>
<ellipse cx="1008.3" cy="253.2" rx="139.5" ry="37.7" fill="url(#gU)"/>
<ellipse cx="1008.3" cy="252.4" rx="138.7" ry="37.5" fill="url(#gU)"/>
<ellipse cx="1008.3" cy="251.6" rx="138" ry="37.3" fill="url(#gU)"/>
<ellipse cx="1008.3" cy="250.8" rx="137.3" ry="37.1" fill="url(#gU)"/>
<ellipse cx="1008.3" cy="250" rx="136.5" ry="36.9" fill="url(#gU)"/>
<ellipse cx="1008.3" cy="249.2" rx="135.8" ry="36.7" fill="url(#gU)"/>
<ellipse cx="1008.3" cy="248.4" rx="135" ry="36.5" fill="url(#gU)"/>
<ellipse cx="1008.3" cy="247.6" rx="135" ry="36.5" fill="url(#gR)" stroke="#08358a" stroke-width="1"/>
<ellipse cx="1008.3" cy="246.8" rx="135" ry="36.5" fill="url(#gR)"/>
<ellipse cx="1008.3" cy="246" rx="135" ry="36.5" fill="url(#gR)"/>
<ellipse cx="1008.3" cy="245.2" rx="135" ry="36.5" fill="url(#gR)"/>
<ellipse cx="1008.3" cy="244.4" rx="135" ry="36.5" fill="url(#gR)"/>
<ellipse cx="1008.3" cy="243.6" rx="135.5" ry="36.6" fill="url(#gL)" stroke="#08358a" stroke-width="1"/>
<ellipse cx="1008.3" cy="242.8" rx="136.4" ry="36.8" fill="url(#gL)"/>
<ellipse cx="1008.3" cy="242" rx="137.3" ry="37.1" fill="url(#gL)"/>
<ellipse cx="1008.3" cy="241.2" rx="138.2" ry="37.3" fill="url(#gL)"/>
<ellipse cx="1008.3" cy="240.4" rx="139" ry="37.5" fill="url(#gL)"/>
<ellipse cx="1008.3" cy="239.6" rx="139.9" ry="37.8" fill="url(#gL)"/>
<ellipse cx="1008.3" cy="238.8" rx="140.8" ry="38" fill="url(#gL)"/>
<ellipse cx="1008.3" cy="238" rx="141.6" ry="38.2" fill="url(#gL)"/>
<ellipse cx="1008.3" cy="237.2" rx="142.5" ry="38.5" fill="url(#gL)"/>
<ellipse cx="1008.3" cy="236.4" rx="143.4" ry="38.7" fill="url(#gL)"/>
<ellipse cx="1008.3" cy="235.6" rx="143.5" ry="38.7" fill="url(#gC)" stroke="#08358a" stroke-width="1"/>
<ellipse cx="1008.3" cy="234.8" rx="143.5" ry="38.7" fill="url(#gC)"/>
<ellipse cx="1008.3" cy="234" rx="143.5" ry="38.7" fill="url(#gC)"/>
<ellipse cx="1008.3" cy="233.2" rx="143.5" ry="38.7" fill="url(#gC)"/>
<ellipse cx="1008.3" cy="232.4" rx="142.9" ry="38.6" fill="url(#gU)" stroke="#08358a" stroke-width="1"/>
<ellipse cx="1008.3" cy="231.6" rx="142.1" ry="38.4" fill="url(#gU)"/>
<ellipse cx="1008.3" cy="230.8" rx="141.4" ry="38.2" fill="url(#gU)"/>
<ellipse cx="1008.3" cy="230" rx="140.6" ry="38" fill="url(#gU)"/>
<ellipse cx="1008.3" cy="229.2" rx="139.9" ry="37.8" fill="url(#gU)"/>
<ellipse cx="1008.3" cy="228.4" rx="139.2" ry="37.6" fill="url(#gU)"/>
<ellipse cx="1008.3" cy="227.6" rx="138.4" ry="37.4" fill="url(#gU)"/>
<ellipse cx="1008.3" cy="226.8" rx="137.7" ry="37.2" fill="url(#gU)"/>
<ellipse cx="1008.3" cy="226" rx="136.9" ry="37" fill="url(#gU)"/>
<ellipse cx="1008.3" cy="225.2" rx="136.2" ry="36.8" fill="url(#gU)"/>
<ellipse cx="1008.3" cy="224.4" rx="135.5" ry="36.6" fill="url(#gU)"/>
<ellipse cx="1008.3" cy="223.6" rx="135" ry="36.5" fill="url(#gR)" stroke="#08358a" stroke-width="1"/>
<ellipse cx="1008.3" cy="222.8" rx="135" ry="36.5" fill="url(#gR)"/>
</g></g>
<path d="M865.4 569.5L871.1 579L876.8 583.3L882.5 586.6L888.3 589.2L894 591.4L899.7 593.4L905.4 595.1L911.1 596.6L916.8 598L922.6 599.2L928.3 600.3L934 601.3L939.7 602.2L945.4 603L951.1 603.7L956.9 604.4L962.6 605L968.3 605.4L974 605.9L979.7 606.2L985.4 606.5L991.2 606.7L996.9 606.9L1002.6 607L1008.3 607L1014 607L1019.7 606.9L1025.4 606.7L1031.2 606.5L1036.9 606.2L1042.6 605.9L1048.3 605.4L1054 605L1059.7 604.4L1065.5 603.7L1071.2 603L1076.9 602.2L1082.6 601.3L1088.3 600.3L1094 599.2L1099.8 598L1105.5 596.6L1111.2 595.1L1116.9 593.4L1122.6 591.4L1128.3 589.2L1134.1 586.6L1139.8 583.3L1145.5 579L1151.2 569.5" fill="none" stroke="#143f8c" stroke-width=".7"/>
<ellipse cx="1015.7" cy="230.2" rx="135.4" ry="38.1" fill="#4d82d1" stroke="#143f8c" stroke-width=".7"/>
<ellipse cx="1008.4" cy="230.1" rx="92.3" ry="26.1" fill="url(#gHole)" stroke="#143f8c" stroke-width=".8"/>
</g>
<use href="#mdl" filter="url(#inl)"/>
</svg>
<div id="toolbar">
<div class="abs" style="left:11.5px;top:9.5px;width:110px;height:61px;border:1.3px solid #dbdbdb;border-radius:5px;background:#f3f3f3"></div>
<span class="t b" style="left:42.5px;top:33px;font-size:12px;color:#333;transform:scaleX(0.8149)">DESIGN</span>
<div class="arr" style="left:85px;top:38.5px"></div>
<span class="t tab" style="left:151px;top:3px;color:#0a8fd0;transform:scaleX(0.9126)">SOLID</span>
<span class="t tab" style="left:228px;top:3px;transform:scaleX(0.8651)">SURFACE</span>
<span class="t tab" style="left:321px;top:3px;transform:scaleX(0.8425)">MESH</span>
<span class="t tab" style="left:394px;top:3px;transform:scaleX(0.8563)">SHEET METAL</span>
<span class="t tab" style="left:507px;top:3px;transform:scaleX(0.8896)">TOOLS</span>
<div class="abs" style="left:138px;top:20.5px;width:57px;height:3px;background:#0696d7"></div>
<span class="t grp" style="left:235px;top:64px;transform:scaleX(0.8450)">CREATE</span><div class="arr" style="left:277px;top:68.5px"></div>
<span class="t grp" style="left:503px;top:64px;transform:scaleX(0.8606)">MODIFY</span><div class="arr" style="left:545.5px;top:68.5px"></div>
<span class="t grp" style="left:679px;top:64px;transform:scaleX(0.8790)">ASSEMBLE</span><div class="arr" style="left:737px;top:68.5px"></div>
<span class="t grp" style="left:774px;top:64px;transform:scaleX(0.8656)">CONSTRUCT</span><div class="arr" style="left:839px;top:68.5px"></div>
<span class="t grp" style="left:873px;top:64px;transform:scaleX(0.8567)">INSPECT</span><div class="arr" style="left:917.5px;top:68.5px"></div>
<span class="t grp" style="left:952px;top:64px;transform:scaleX(0.8578)">INSERT</span><div class="arr" style="left:990px;top:68.5px"></div>
<span class="t grp" style="left:1021.5px;top:64px;transform:scaleX(0.8603)">SELECT</span><div class="arr" style="left:1062px;top:68.5px"></div>
<div class="sep" style="left:393.5px"></div><div class="sep" style="left:662px"></div><div class="sep" style="left:759.5px"></div><div class="sep" style="left:858.5px"></div><div class="sep" style="left:937px"></div><div class="sep" style="left:1006px"></div>
<svg id="tbicons" width="1920" height="81" viewBox="0 0 1920 81" style="left:0;top:0">
<g id="i-sketch" stroke="#4a4a4a" stroke-width="1.1" fill="none">
<path d="M141.5 27.4H163.5M138.5 30V52M165.7 30.5V43.7M141.5 54.5H154.5M148 34.4H156M145.4 37V45M158.4 37Q157 46 148.4 47.6"/>
<g fill="#4a4a4a" stroke="none"><rect x="137" y="26" width="3" height="3"/><rect x="164.2" y="26" width="3" height="3"/><rect x="137" y="53" width="3" height="3"/><rect x="144" y="33" width="3" height="3"/><rect x="157" y="33" width="3" height="3"/><rect x="144" y="46.2" width="3" height="3"/></g>
<path d="M160 44h4v5h5v4h-5v5h-4v-5h-5v-4h5z" fill="#2bb44c" stroke="#22a040" stroke-width=".6"/>
</g>
<g id="i-extrude">
<path d="M181.1 53.9H199L204.8 48V52L199 57.6H181.1z" fill="#b9b9b9"/><path d="M199 53.9L204.8 48V52L199 57.6z" fill="#a2a2a2"/>
<rect x="181.1" y="32.2" width="17.9" height="20.6" fill="#6ab0e4"/>
<path d="M181.1 32.2L187.5 26.1H204.8L199 32.2z" fill="#8ccbf8"/>
<path d="M199 32.2L204.8 26.1V47L199 52.8z" fill="#4a94d0"/>
<path d="M208.4 51.8V29.5" stroke="#222" stroke-width="1.3"/><path d="M208.4 26.8L211 31.2H205.8z" fill="#222"/>
</g>
<g id="i-revolve">
<path d="M223.1 39.6Q238.5 26.5 254.6 39.3L248.8 45Q238.5 37 228.8 44.4z" fill="#8ccbf8"/>
<path d="M228.8 44.4Q238.5 37 248.8 45V53.9Q238.5 46.5 228.8 54.5z" fill="#6ab0e4"/>
<path d="M223.1 39.6L228.8 44.4V54.5L223.1 48.4z" fill="#4a94d0"/>
<path d="M249.4 45.2L254.4 40.5V49L249.4 53.7z" fill="#fff" stroke="#4a4a4a" stroke-width="1.1"/>
<path d="M252.5 33.5Q239 23.5 226.5 32" fill="none" stroke="#222" stroke-width="1.1"/><path d="M223.6 33.8L226 29.5L229 33.2z" fill="#222"/>
</g>
<g id="i-hole">
<path d="M266.4 33.5L274.2 26.4H297.6L290.5 33.5z" fill="#f2f2f2"/>
<path d="M290.5 33.5L297.6 26.4V49.5L290.5 57.6z" fill="#bdbdbd"/>
<rect x="266.4" y="33.5" width="24.1" height="24.1" fill="#dcdcdc"/>
<path d="M266.4 57.6V33.5L274.2 26.4H297.6V49.5L290.5 57.6z" fill="none" stroke="#555" stroke-width="1.3" stroke-linejoin="round"/>
<circle cx="278.1" cy="45.7" r="8.3" fill="#f4f4f4" stroke="#666" stroke-width="1"/>
<path d="M276.5 39.2A7 7 0 1 0 285 47.5Q278.5 46.5 276.5 39.2z" fill="#6ab0e4"/>
</g>
<g id="i-pattern" stroke="#4a4a4a" stroke-width="1.1">
<path d="M317.5 31.6H329M317.5 52.6H329M312.6 36.3V47.8" fill="none"/>
<rect x="309.6" y="28.6" width="6" height="6" fill="#fff"/>
<g fill="#6ab0e4" stroke="none"><rect x="330" y="28.2" width="6.8" height="6.8"/><rect x="309.2" y="49.1" width="6.8" height="6.8"/><rect x="330" y="49.1" width="6.8" height="6.8"/></g>
</g>
<g id="i-form">
<path d="M352.3 38Q352.3 28.5 362 28.3H369Q377 28.5 379 33L381.8 40V50Q381 53 377 56.5Q374 57.9 368 57.9H360Q352.5 57.5 352.3 50z" fill="#a57fe6" stroke="#9468d2" stroke-width=".8"/>
<path d="M354 36Q355 29.5 362 29.2H369Q374 29.4 376 31L370 37H355z" fill="#c9a9fa"/>
<path d="M376 42L381 40V50Q380 53 376 56z" fill="#8b63cb"/>
<path d="M353 46H374M362.5 30V57M376.5 42V55" stroke="#8a62c8" stroke-width=".9" fill="none"/>
<path d="M370 37Q374 37 374.5 42V52Q374 56.5 369 57" stroke="#d6c0fb" stroke-width="1.2" fill="none"/>
<path id="star" d="M375.4 26.3L376.7 31.6L381.3 28.7L378.4 33.3L383.7 34.6L378.4 35.9L381.3 40.5L376.7 37.6L375.4 42.9L374.1 37.6L369.5 40.5L372.4 35.9L367.1 34.6L372.4 33.3L369.5 28.7L374.1 31.6z" fill="#ffa800"/>
</g>
<g id="i-presspull">
<path d="M407.3 32.5L413.2 26.4H418V57.6H407.3z" fill="#fff"/>
<rect x="407.3" y="32.5" width="6" height="25.1" fill="#dcdcdc"/>
<path d="M418 26.4H413.2L407.3 32.5V57.6H413" fill="none" stroke="#555" stroke-width="1.3"/>
<rect x="414.2" y="32.5" width="9.2" height="25.1" fill="#6ab0e4"/>
<path d="M414.2 32.5L419.6 26.2H429L423.4 32.5z" fill="#8ccbf8"/>
<path d="M423.4 32.5L429 26.2V51.5L423.4 57.6z" fill="#4a94d0"/>
<rect x="426" y="39.7" width="6" height="3.6" fill="#fff"/>
<path d="M427 41.5H433" stroke="#222" stroke-width="1.2"/><path d="M436.2 41.5L432.2 39V44z" fill="#222"/>
</g>
<g id="i-fillet">
<path d="M449.4 33.2L456.5 26.4H467L461 33.2z" fill="#fff"/>
<path d="M449.4 33.8H460Q472 35 473.5 47V57.6H449.4z" fill="#dcdcdc"/>
<path d="M473.5 47L480.6 41V49.8L473.5 57.6z" fill="#b9b9b9"/>
<path d="M461 33L467 26.4Q478 29 480.8 39.6L474.1 46Q472 35.5 461 33z" fill="#6ab0e4"/>
<path d="M465.5 26.4H456.5L449.4 33.2V57.6H473.5L480.6 49.8V41" fill="none" stroke="#555" stroke-width="1.3" stroke-linejoin="round"/>
</g>
<g id="i-shell">
<path d="M492.4 33.5L499.5 26.4H523.9L516.5 33.5z" fill="#f4f4f4"/>
<path d="M516.5 33.5L523.9 26.4V49.8L516.5 57.6z" fill="#bdbdbd"/>
<rect x="492.4" y="33.5" width="24.1" height="24.1" fill="#dcdcdc"/>
<rect x="494.8" y="36.9" width="18.2" height="17" fill="#f4f4f4"/>
<path d="M496.1 38.1H503.7V46L496.1 53.5z" fill="#4a94d0"/>
<path d="M496.1 53.5L503.7 46H511.8V53.5z" fill="#8ccbf8"/>
<path d="M492.4 57.6V33.5L499.5 26.4H523.9V49.8L516.5 57.6z" fill="none" stroke="#555" stroke-width="1.3" stroke-linejoin="round"/>
</g>
<g id="i-combine">
<rect x="545.2" y="30.2" width="18" height="17.4" fill="#6ab0e4"/>
<path d="M545.2 30.2L549 26.2H566.9L563.2 30.2z" fill="#8ccbf8"/>
<path d="M563.2 30.2L566.9 26.2V43.4L563.2 47.6z" fill="#4a94d0"/>
<rect x="535.1" y="40" width="18.3" height="17.6" fill="#6ab0e4"/>
<path d="M535.1 40L538.8 36.2H545.2V40z" fill="#8ccbf8"/>
<path d="M553.4 47.6H556.9V53.5L553.4 57.6z" fill="#4a94d0"/>
</g>
<g id="i-offset">
<rect x="580.1" y="32.2" width="22" height="9.5" fill="#6ab0e4"/>
<path d="M580.1 32.2L586.2 26.2H607.9L602.1 32.2z" fill="#8ccbf8"/>
<path d="M602.1 32.2L607.9 26.2V35.2L602.1 41.7z" fill="#4a94d0"/>
<path d="M578 44.5H602.8L609.9 36.6" fill="none" stroke="#fff" stroke-width="3.5"/>
<rect x="580.1" y="47.1" width="22" height="9.5" fill="#dcdcdc"/>
<path d="M602.1 47.1L607.9 41.5V51.5L602.1 56.6z" fill="#b9b9b9"/>
<path d="M580.1 47.1V56.6H602.1L607.9 51.5V44.5" fill="none" stroke="#555" stroke-width="1.1"/>
<path d="M578 44.5H602.8L609.9 36.6" fill="none" stroke="#2f8fe6" stroke-width="1.3"/>
</g>
<text id="i-fx" x="620.5" y="51.5" font-family="Liberation Serif,serif" font-style="italic" font-size="35" fill="#5a5a5a" textLength="32" lengthAdjust="spacingAndGlyphs">fx</text>
<g id="i-newcomp">
<rect x="675.2" y="45.7" width="11.9" height="11.5" fill="#dcdcdc"/>
<rect x="687.5" y="46.1" width="11.6" height="11.1" fill="#dcdcdc"/>
<path d="M687.5 46.1L691.6 42.1H702.6L699.1 46.1z" fill="#fff"/>
<path d="M699.1 46.1L702.6 42.1V53.6L699.1 57.2z" fill="#b9b9b9"/>
<path d="M675.2 45.7V57.2H699.1L702.6 53.6V42.1H691.6L687.3 46.1M687.3 46V57.2M687.3 46.1H699.1V57.2M699.1 46.1L702.6 42.1" fill="none" stroke="#555" stroke-width="1.2"/>
<rect x="675.2" y="34.2" width="11.9" height="11.5" fill="#6ab0e4"/>
<path d="M675.2 34.2L678.3 30.2H690.9L687.1 34.2z" fill="#8ccbf8"/>
<path d="M687.1 34.2L690.9 30.2V41.3L687.1 45.7z" fill="#4a94d0"/>
<use href="#star" transform="translate(323.1,-.4)"/>
</g>
<g id="i-joint" stroke="#555" stroke-width="1.1" stroke-linejoin="round">
<path d="M720.3 35.5L727 28.8Q729.5 27.2 732.5 29V38.5Q730 40.5 727.5 39.2V48.5L721.5 54.8Q720.3 55 720.3 53.5z" fill="#c4c4c4"/>
<path d="M727 29Q729.5 27.4 732.5 29V38.5Q730 40.5 727.2 39.2z" fill="#e2e2e2"/>
<path d="M740.5 30.5L747.6 36.5V54.5Q747 56 745.5 55L740.5 50.5z" fill="#e0e0e0"/>
<path d="M735.3 38.5Q738 36.6 740.5 38.4V48.5Q738 50 735.3 48.3z" fill="#c4c4c4"/>
<path d="M729.5 41V46M738.5 34V39.8" stroke="#2f8fe6" stroke-width="1.2"/>
</g>
<g id="i-construct">
<path d="M795.2 35L804.5 26.2H811.5L802.7 35z" fill="#fff"/>
<rect x="795.2" y="35" width="7.5" height="21.3" fill="#dcdcdc"/>
<path d="M811 26.2H804.5L795.2 35V56.3H802.7" fill="none" stroke="#555" stroke-width="1.3"/>
<path d="M804.2 35L812.9 26.6V47.9L804.2 56.3z" fill="#5cc884" stroke="#4db574" stroke-width=".7"/>
<path d="M816.2 35L824.8 26.6V47.9L816.2 56.3z" fill="#e89c66" stroke="#d88a52" stroke-width=".7"/>
</g>
<g id="i-inspect">
<rect x="885.1" y="44.3" width="27.8" height="5.5" fill="#ffa500" stroke="#e89400" stroke-width=".6"/>
<path d="M888 44.3v2M891 44.3v2.8M894 44.3v2M897 44.3v2.8M900 44.3v2M903 44.3v2.8M906 44.3v2M909 44.3v2.8" stroke="#6b4a00" stroke-width=".8"/>
<path d="M885.6 34V43M912.4 34V43M888 38.4H910" stroke="#555" stroke-width="1.1" fill="none"/>
<path d="M886.5 38.4L890.5 36V40.8zM911.5 38.4L907.5 36V40.8z" fill="#555"/>
</g>
<g id="i-insert">
<rect x="958.3" y="27.4" width="28.4" height="28.2" fill="#8ccbf8" stroke="#4a94d0" stroke-width=".8"/>
<path d="M958.7 46Q964 37 969 40.5Q973 44 975.5 48.5Q980 42.5 983.5 45.5L986.3 49V55.2H958.7z" fill="#3f8fcc"/>
<circle cx="978.8" cy="35" r="3.1" fill="#fffcd0"/>
</g>
<g id="i-select">
<rect x="1029.3" y="26.6" width="27" height="20.6" fill="none" stroke="#2bb44c" stroke-width="1.2" stroke-dasharray="3.4 2"/>
<path d="M1050.3 40.5V54.5L1053.5 51.6L1055.8 57L1058.3 55.9L1056 50.7H1060.3z" fill="#fff" stroke="#222" stroke-width="1" stroke-linejoin="round"/>
</g>

</svg>
</div>
<div id="tshadow"></div>
<div class="abs" style="left:4px;top:85.5px;width:300px;height:24.5px;background:#f2f2f2;border:1px solid #fafafa;box-shadow:0 0 1.5px rgba(80,90,95,.55)"></div>
<span class="t" style="left:29px;top:89.8px;font-size:11.5px;color:#444;transform:scaleX(0.8667)">BROWSER</span>
<div class="abs" style="left:4px;top:945px;width:300px;height:24.5px;background:#f2f2f2;border:1px solid #fafafa;box-shadow:0 0 1.5px rgba(80,90,95,.55)"></div>
<span class="t" style="left:29px;top:949.5px;font-size:11.5px;color:#444;transform:scaleX(0.8496)">COMMENTS</span>
<div class="row" style="left:40px;top:115px;width:176px"></div>
<div class="hl" style="left:65px;top:117.3px;width:126px;height:15.5px;background:#9b9b9b"></div>
<span class="t b" style="left:98.7px;top:118px;color:#fff;transform:scaleX(1.0101)">ToiletHandle v2</span>
<div class="row" style="left:58px;top:139px;width:134px"></div>
<span class="t" style="left:91.2px;top:142px;transform:scaleX(0.9652)">Document Settings</span>
<div class="row" style="left:76px;top:163px;width:134px"></div>
<span class="t" style="left:109px;top:166px;transform:scaleX(0.9749)">Threads: Cosmetic</span>
<div class="row" style="left:76px;top:187px;width:82px"></div>
<span class="t" style="left:109.4px;top:190px;transform:scaleX(0.9283)">Units: in</span>
<div class="row" style="left:58px;top:211px;width:110px"></div>
<span class="t" style="left:91.5px;top:214px;transform:scaleX(0.9945)">Named Views</span>
<div class="row" style="left:58px;top:235px;width:95px"></div>
<span class="t" style="left:116.5px;top:238px;transform:scaleX(0.9304)">Origin</span>
<div class="row" style="left:58px;top:259px;width:103px"></div>
<span class="t" style="left:116.5px;top:262px;transform:scaleX(0.9601)">Bodies</span>
<div class="row" style="left:76px;top:283px;width:99px"></div>
<div class="hl" style="left:101px;top:283.1px;width:74px;height:19.8px;background:#0696d7"></div>
<span class="t b" style="left:134.4px;top:286px;color:#fff;transform:scaleX(0.9576)">Body1</span>
<div class="row" style="left:58px;top:307px;width:115px"></div>
<span class="t" style="left:116.3px;top:310px;transform:scaleX(0.9834)">Sketches</span>
<div class="row" style="left:76px;top:331px;width:107px"></div>
<span class="t" style="left:134.2px;top:334px;transform:scaleX(0.9560)">Sketch1</span>
<div class="row" style="left:76px;top:355px;width:107px"></div>
<span class="t" style="left:134.2px;top:358px;transform:scaleX(0.9560)">Sketch2</span>
<div class="row" style="left:76px;top:379px;width:107px"></div>
<span class="t" style="left:134.2px;top:382px;transform:scaleX(0.9560)">Sketch3</span>
<div class="row" style="left:76px;top:403px;width:107px"></div>
<span class="t" style="left:134.2px;top:406px;transform:scaleX(0.9560)">Sketch4</span>
<div class="row" style="left:76px;top:427px;width:107px"></div>
<span class="t" style="left:134.2px;top:430px;transform:scaleX(0.9560)">Sketch5</span>
<div class="row" style="left:76px;top:451px;width:107px"></div>
<span class="t" style="left:134.2px;top:454px;transform:scaleX(0.9560)">Sketch6</span>
<div class="row" style="left:76px;top:475px;width:107px"></div>
<span class="t" style="left:134.2px;top:478px;transform:scaleX(0.9560)">Sketch7</span>
<div class="row" style="left:76px;top:499px;width:107px"></div>
<span class="t" style="left:134.2px;top:502px;transform:scaleX(0.9560)">Sketch8</span>
<div class="row" style="left:58px;top:523px;width:131px"></div>
<span class="t" style="left:116.3px;top:526px;transform:scaleX(0.9747)">Construction</span>
<svg id="bicons" width="320" height="1024" viewBox="0 0 320 1024" style="left:0;top:0">
<defs>
<linearGradient id="gTri" x1="0" y1="0" x2="1" y2="1"><stop offset=".45" stop-color="#fff"/><stop offset="1" stop-color="#555"/></linearGradient>
<linearGradient id="gCube" x1="0" y1="0" x2="1" y2="1"><stop offset="0" stop-color="#f4f4f6"/><stop offset="1" stop-color="#d4d6dc"/></linearGradient>
<linearGradient id="gBody" x1="0" y1="0" x2="1" y2="0"><stop offset="0" stop-color="#fff"/><stop offset=".5" stop-color="#e4e4e4"/><stop offset="1" stop-color="#fff"/></linearGradient>
<symbol id="tri-open" overflow="visible"><path d="M11.5 4.5V15.5H1z" fill="url(#gTri)" stroke="#333" stroke-width="1" stroke-linejoin="round"/></symbol>
<symbol id="tri-closed" overflow="visible"><path d="M2.2 4.2L11 10.2L2.2 16.2z" fill="#fff" stroke="#333" stroke-width="1.1" stroke-linejoin="round"/></symbol>
<symbol id="eye" overflow="visible"><path d="M0 10Q8 1.5 16 10Q8 18.5 0 10z" fill="#8a8a8a"/><circle cx="8" cy="10" r="3.7" fill="#f1f1f1"/><circle cx="8" cy="10" r="2" fill="#8a8a8a"/></symbol>
<symbol id="eye-off" overflow="visible"><path d="M.5 10Q8 2.5 15.5 10Q8 17.5 .5 10z" fill="none" stroke="#a8a8a8" stroke-width="1"/><circle cx="8" cy="10" r="3" fill="none" stroke="#a8a8a8" stroke-width="1"/><path d="M2.5 4.5L13.5 16" stroke="#888" stroke-width="1"/></symbol>
<symbol id="folder" overflow="visible"><path d="M0 4.3h7l1 1.6h8v11h-16z" fill="#9a9a9a"/><path d="M.5 5.2h6" stroke="#c8c8c8" stroke-width=".8"/></symbol>
<symbol id="cube" overflow="visible"><path d="M1.2 6.5L5.5 2.2H16.2V13.5L12 17.8H1.2z" fill="url(#gCube)" stroke="#222" stroke-width="1" stroke-linejoin="round"/><path d="M1.2 6.5H12V17.8M12 6.5L16.2 2.2" fill="none" stroke="#fff" stroke-width=".9"/></symbol>
<symbol id="body" overflow="visible"><path d="M.7 5Q.7 2.3 8 2.3T15.3 5V15Q15.3 17.7 8 17.7T.7 15z" fill="url(#gBody)" stroke="#222" stroke-width="1"/><path d="M1.2 5.3Q8 8 14.8 5.3" fill="none" stroke="#fff" stroke-width="1.2"/></symbol>
<symbol id="radio" overflow="visible"><circle cx="7.2" cy="10" r="6" fill="#fff" stroke="#222" stroke-width="1.1"/><circle cx="7.2" cy="10" r="2.6" fill="#222"/></symbol>
<symbol id="gear" overflow="visible"><g transform="translate(8,10)" fill="#909090"><circle r="5.6"/><g id="teeth"><rect x="-1.7" y="-8" width="3.4" height="16" rx=".6"/><rect x="-1.7" y="-8" width="3.4" height="16" rx=".6" transform="rotate(45)"/><rect x="-1.7" y="-8" width="3.4" height="16" rx=".6" transform="rotate(90)"/><rect x="-1.7" y="-8" width="3.4" height="16" rx=".6" transform="rotate(135)"/></g><circle r="2.5" fill="#f1f1f1"/></g></symbol>
<symbol id="thread" overflow="visible"><path d="M3 2.8H13V17.2H3z" fill="none" stroke="#aaa" stroke-width="1"/><path d="M1 8L15 5.5M1 11L15 8.5M1 14L15 11.5M1 16.5L15 14.2" stroke="#2f8fe6" stroke-width="1.2"/><rect x="2" y="6" width="12" height="9" fill="none"/></symbol>
<symbol id="units" overflow="visible"><path d="M2.3 2H10L14.2 6.2V15H2.3z" fill="#eceef2" stroke="#222" stroke-width="1" stroke-linejoin="round"/><path d="M10 2V6.2H14.2" fill="none" stroke="#222" stroke-width=".9"/><rect x="1" y="14.6" width="14.6" height="3.4" rx=".8" fill="#ffb400" stroke="#d89000" stroke-width=".6"/><path d="M3.5 14.8v1.4M5.5 14.8v1.4M7.5 14.8v1.4M9.5 14.8v1.4M11.5 14.8v1.4M13.5 14.8v1.4" stroke="#7a5200" stroke-width=".5"/></symbol>
<symbol id="sk-lock" overflow="visible"><path d="M3.8 3.2H13M2 5V15.5M15 5V9M3.8 17.2H8" stroke="#444" stroke-width="1" fill="none"/><g fill="#444"><rect x="1" y="2.2" width="2" height="2"/><rect x="14" y="2.2" width="2" height="2"/><rect x="1" y="16.2" width="2" height="2"/></g><path d="M11.3 13V11.5a2.2 2.2 0 0 1 4.4 0V13" fill="none" stroke="#d0202c" stroke-width="1.2"/><rect x="10" y="13" width="7" height="4.8" fill="#e58088" stroke="#d0202c" stroke-width="1"/></symbol>
<symbol id="sk-edit" overflow="visible"><path d="M3.8 3.2H13M2 5V15.5M15 5V9M3.8 17.2H8" stroke="#444" stroke-width="1" fill="none"/><g fill="#1a8fe8"><rect x="1" y="2.2" width="2" height="2"/><rect x="14" y="2.2" width="2" height="2"/><rect x="1" y="16.2" width="2" height="2"/></g><path d="M10 17.5L11 14.8L15.3 10.5L17.3 12.5L13 16.8z" fill="#f6c445"/><path d="M15.3 10.5L16.3 9.5Q17.3 9 18 10Q18.6 10.8 18 11.6L17.3 12.5z" fill="#f0323c"/><path d="M10 17.5L11 14.8L12.7 16.5z" fill="#555"/></symbol>
</defs>
<use href="#tri-open" x="20" y="115"/>
<use href="#eye" x="43" y="115"/>
<use href="#cube" x="67" y="115"/>
<use href="#radio" x="194" y="115"/>
<use href="#tri-open" x="38" y="139"/>
<use href="#gear" x="61" y="139"/>
<use href="#thread" x="79" y="163"/>
<use href="#units" x="79" y="187"/>
<use href="#tri-closed" x="38" y="211"/>
<use href="#folder" x="61" y="211"/>
<use href="#tri-closed" x="38" y="235"/>
<use href="#eye-off" x="61" y="235"/>
<use href="#folder" x="86" y="235"/>
<use href="#tri-open" x="38" y="259"/>
<use href="#eye" x="61" y="259"/>
<use href="#folder" x="86" y="259"/>
<use href="#eye" x="79" y="283"/>
<use href="#body" x="104" y="283"/>
<use href="#tri-open" x="38" y="307"/>
<use href="#eye-off" x="61" y="307"/>
<use href="#folder" x="86" y="307"/>
<use href="#eye" x="79" y="331" opacity=".32"/>
<use href="#sk-lock" x="103" y="331"/>
<use href="#eye" x="79" y="355" opacity=".32"/>
<use href="#sk-lock" x="103" y="355"/>
<use href="#eye" x="79" y="379" opacity=".32"/>
<use href="#sk-lock" x="103" y="379"/>
<use href="#eye" x="79" y="403" opacity=".32"/>
<use href="#sk-lock" x="103" y="403"/>
<use href="#eye" x="79" y="427" opacity=".32"/>
<use href="#sk-lock" x="103" y="427"/>
<use href="#eye" x="79" y="451" opacity=".32"/>
<use href="#sk-edit" x="103" y="451"/>
<use href="#eye" x="79" y="475" opacity=".32"/>
<use href="#sk-lock" x="103" y="475"/>
<use href="#eye" x="79" y="499" opacity=".32"/>
<use href="#sk-lock" x="103" y="499"/>
<use href="#tri-closed" x="38" y="523"/>
<use href="#eye" x="61" y="523"/>
<use href="#folder" x="86" y="523"/>
<path d="M8.4 97.3L13.1 94.2V100.4zM13.9 97.3L18.6 94.2V100.4z" fill="#222"/>
<circle cx="287.5" cy="97.4" r="4.4" fill="#2b2b2b"/><rect x="284.8" y="96.7" width="5.4" height="1.5" fill="#f2f2f2"/>
<path d="M299.4 92.3V102.9M301.6 94.2V101" stroke="#777" stroke-width="1"/>
<circle cx="287.5" cy="957.3" r="4.4" fill="#2b2b2b"/><path d="M284.8 957.3h5.4M287.5 954.6v5.4" stroke="#f2f2f2" stroke-width="1.4"/>
<path d="M299.4 952.3V962.9M301.6 954.2V961" stroke="#777" stroke-width="1"/>
<path d="M83 275.3H158.5" stroke="#4a6ea6" stroke-width="2.2" stroke-dasharray="2.2 3.6" transform="skewX(-40)" style="transform-origin:120px 275px"/>
</svg>
<div id="dlg" class="abs" style="left:1558px;top:310.5px;width:250px;height:362.5px;background:#f2f2f2;border:1px solid #e4e4e4;box-shadow:0 0 2px rgba(60,70,75,.5)"></div>
<div class="abs" style="left:1559px;top:334px;width:248px;height:1px;background:#d9d9d9"></div>
<div class="abs" style="left:1559px;top:636px;width:248px;height:1px;background:#d9d9d9"></div>
<span class="t" style="left:1583px;top:315px;color:#3a3a3a;transform:scaleX(0.9441)">SAVE AS MESH</span>
<span class="t" style="left:1571.2px;top:343px;transform:scaleX(0.9610)">Selection</span>
<span class="t" style="left:1571.2px;top:373px;transform:scaleX(0.9413)">Format</span>
<span class="t" style="left:1571.2px;top:403px;transform:scaleX(0.9399)">Unit Type</span>
<span class="t" style="left:1571.2px;top:433px;color:#a9a9a9;transform:scaleX(0.9901)">Structure</span>
<span class="t" style="left:1571.2px;top:463px;transform:scaleX(0.9931)">Preview Mesh</span>
<span class="t" style="left:1571.2px;top:493px;color:#a9a9a9;transform:scaleX(0.9733)">Number of Triangles</span>
<span class="t" style="left:1571.2px;top:523px;transform:scaleX(0.9562)">Refinement</span>
<span class="t b" style="left:1576.2px;top:553px;font-size:11.5px;transform:scaleX(1.0003)">Refinement Options</span>
<span class="t b" style="left:1576.2px;top:583px;font-size:11.5px;transform:scaleX(0.9950)">Output</span>
<span class="t" style="left:1571.2px;top:613px;transform:scaleX(0.9471)">Send to 3D Print Utility</span>
<div class="abs" style="left:1689.5px;top:336.5px;width:57.5px;height:27px;background:#0696d7;border-radius:1.5px"></div>
<span class="t" style="left:1711.5px;top:343px;color:#fff;transform:scaleX(0.9243)">1 se...</span>
<div class="abs dd" style="left:1689.5px;top:366.6px"></div>
<div class="abs dd" style="left:1689.5px;top:396.6px"></div>
<div class="abs dd" style="left:1689.5px;top:516.6px"></div>
<span class="t" style="left:1697.3px;top:373px;transform:scaleX(0.8864)">3MF</span>
<span class="t" style="left:1697.3px;top:403px;transform:scaleX(0.9617)">Inch</span>
<span class="t" style="left:1697.3px;top:433px;color:#a9a9a9;transform:scaleX(0.9091)">One File</span>
<span class="t" style="left:1697.3px;top:523px;transform:scaleX(0.9329)">Medium</span>
<span class="t" style="left:1694.3px;top:493px;color:#a9a9a9;transform:scaleX(0.8980)">0</span>
<div class="abs cb" style="left:1694.3px;top:463.4px"></div>
<div class="abs cb" style="left:1694.3px;top:613.4px"></div>
<div class="abs btn" style="left:1666.5px;top:645.5px;width:59.5px"></div>
<div class="abs btn" style="left:1736.2px;top:645.5px;width:60px"></div>
<span class="t" style="left:1686.8px;top:647.5px;font-size:13px;color:#444;transform:scaleX(0.9576)">OK</span>
<span class="t" style="left:1746px;top:647.5px;font-size:13px;color:#444;transform:scaleX(0.9637)">Cancel</span>
<svg id="dicons" width="260" height="370" viewBox="1555 308 260 370" style="left:1555px;top:308px">
<circle cx="1568.6" cy="322.3" r="4.4" fill="#2b2b2b"/><rect x="1565.9" y="321.6" width="5.4" height="1.5" fill="#f2f2f2"/>
<path d="M1697.5 342.8V355.3L1700.3 352.8L1702.3 357.3L1704.2 356.4L1702.3 352H1706.3z" fill="#dfe3ea" stroke="#2a2a2a" stroke-width="1" stroke-linejoin="round"/>
<path d="M1758 346.3L1765.4 353.7M1765.4 346.3L1758 353.7" stroke="#484848" stroke-width="1.9"/>
<path d="M1764 378.3h6l-3 4zM1764 408.3h6l-3 4zM1764 528.3h6l-3 4z" fill="#222"/>
<path d="M1764 438.3h6l-3 4z" fill="#9a9a9a"/>
<path d="M1564 555.5V564.5L1569.6 560z" fill="#222"/>
<path d="M1563.3 586.8H1572.3L1567.8 592.8z" fill="#222"/>
<circle cx="1573.1" cy="655" r="5.2" fill="#111"/><rect x="1572.2" y="654" width="1.9" height="4" fill="#fff"/><rect x="1572.2" y="651.5" width="1.9" height="1.7" fill="#fff"/>
</svg>
<!-- view cube -->
<svg id="vcube" width="140" height="120" viewBox="1780 80 140 120" style="left:1780px;top:80px">
<defs><filter id="vb"><feGaussianBlur stdDeviation=".5"/></filter><filter id="vb2"><feGaussianBlur stdDeviation="3"/></filter></defs>
<ellipse cx="1858" cy="181" rx="34" ry="8" fill="#6e7d84" opacity=".55" filter="url(#vb2)"/>
<g filter="url(#vb)">
<path d="M1828.5 118.5L1863.5 117.5L1888 124.5L1838.5 127.5z" fill="#c3c8cb"/>
<path d="M1828.5 118.5L1838.5 127.5V179.5L1829.5 161z" fill="#bcc2c6"/>
<path d="M1838.5 127.5L1888 124.5L1886.5 173L1838.5 179.5z" fill="#b9c0c5"/>
<path d="M1848 135.5L1878.5 134.5L1878 164L1848 168z" fill="#abb4bc"/>
<path d="M1828.5 118.5L1863.5 117.5L1888 124.5L1886.5 173L1838.5 179.5L1829.5 161z" fill="none" stroke="#9aa2a6" stroke-width=".8"/>
<path d="M1838 117.5V179.5" stroke="#3ed23e" stroke-width="2.6"/>
<path d="M1838.5 179.8L1893 172.8" stroke="#2a38d8" stroke-width="2.4"/>
<path d="M1838 179.5L1827 158" stroke="#c85a5a" stroke-width="2.2"/>
<path d="M1833.5 105L1836.5 110L1839.5 105M1836.5 110V115" stroke="#4cc84c" stroke-width="1.6" fill="none"/>
<path d="M1898.5 167H1904L1898.5 176H1904.5" stroke="#4450d8" stroke-width="1.5" fill="none"/>
<path d="M1824.5 153L1828.5 162M1828.5 153L1824.5 162" stroke="#d06060" stroke-width="1.5" fill="none"/>
</g>
<text x="1853" y="156" font-family="Liberation Sans,sans-serif" font-size="11" font-weight="700" fill="#6a7278" transform="rotate(-3 1863 152)" textLength="22" lengthAdjust="spacingAndGlyphs" style="filter:url(#vb)">LEFT</text>
</svg>

<div id="timeline"></div>
<div class="abs" style="left:0;top:1021.5px;width:1920px;height:2.5px;background:#ededed;border-top:1px solid #d2d2d2"></div><div class="abs" style="left:48.5px;top:1022.3px;width:343px;height:2px;background:#fcfcfc"></div>
<div class="abs" style="left:656px;top:946px;width:237px;height:24px;background:#f2f2f2"></div>
<span class="t b" style="left:1872px;top:951px;font-size:11.5px;color:#2a2a2a;transform:scaleX(0.9102)">Body1</span>
<svg id="boticons" width="1920" height="100" viewBox="0 924 1920 100" style="left:0;top:924px">
<defs>
<symbol id="tl-sk" overflow="visible"><path d="M-4.4 -7.1H4.2M-6.6 -5V3.6M6.3 -5V-1M-4.4 5.6H1.5" stroke="#444" stroke-width="1" fill="none"/><g fill="#1a8fe8"><rect x="-7.7" y="-8.2" width="2.2" height="2.2"/><rect x="5.2" y="-8.2" width="2.2" height="2.2"/><rect x="-7.7" y="4.5" width="2.2" height="2.2"/></g><path d="M1.3 7.1L2.4 4.4L6.6 .2L8.4 2L4.2 6.2z" fill="#f6c445"/><path d="M6.6 .2L7.5 -.7Q8.4 -1.2 9.1 -.4Q9.7 .4 9.2 1.2L8.4 2z" fill="#f0323c"/><path d="M1.3 7.1L2.3 4.6L4 6.3z" fill="#555"/></symbol>
<symbol id="tl-ex" overflow="visible"><path d="M-7.5 5.5H1.7L4.3 3V5L1.7 7.7H-7.5z" fill="#c4c4c4"/><rect x="-7.5" y="-4.8" width="9.2" height="9.6" fill="#6ab0e4"/><path d="M-7.5 -4.8L-4.6 -7.8H4.3L1.7 -4.8z" fill="#8ccbf8"/><path d="M1.7 -4.8L4.3 -7.8V2.2L1.7 4.8z" fill="#4a94d0"/><path d="M7.1 4.8V-5" stroke="#222" stroke-width="1.1"/><path d="M7.1 -7.4L9 -4.2H5.2z" fill="#222"/></symbol>
<symbol id="tl-pl" overflow="visible"><path d="M-7.6 -3.5L-3.4 -7.8H-1V8H-7.6z" fill="#e4e4e4"/><path d="M-.8 -7.8H-3.4L-7.6 -3.5V8H-4" fill="none" stroke="#555" stroke-width="1"/><path d="M-3 -3.5L1.7 -7.5V4L-3 8z" fill="#5cc884"/><path d="M3.4 -3.5L8.1 -7.5V4L3.4 8z" fill="#e89c66"/></symbol>
<symbol id="tl-ho" overflow="visible"><path d="M-8.1 -8H8.1V2.5L4 4.5H-4L-8.1 2.5z" fill="#4a94d0"/><path d="M-6.5 -8H6.5L2 2H-2z" fill="#8ccbf8"/><circle cx="0" cy="3.9" r="3.9" fill="#f4f4f4" stroke="#444" stroke-width="1"/></symbol>
<symbol id="tl-th" overflow="visible"><path d="M-5 -7.5H5V7.5H-5z" fill="none" stroke="#aaa" stroke-width="1"/><path d="M-7.5 -2L7.5 -4.5M-7.5 1L7.5 -1.5M-7.5 4L7.5 1.5M-7.5 6.5L7.5 4.2" stroke="#2f8fe6" stroke-width="1.2"/></symbol>
<path id="ddarrow" d="M0 0h6l-3 4z" fill="#222"/>
</defs>
<g fill="#3a3a3a">
<rect x="10.8" y="993.2" width="2.2" height="13.6"/><path d="M23 993.2V1006.8L13.5 1000z"/>
<path d="M45 993.2V1006.8L35.2 1000z"/><rect x="46" y="997" width="2" height="6"/>
<path d="M61 991.8V1008.2L72.6 1000z"/>
<rect x="84.8" y="997" width="2" height="6"/><path d="M87.8 993.2V1006.8L97.5 1000z"/>
<path d="M110.8 993.2V1006.8L120.3 1000z"/><rect x="120.9" y="993.2" width="2.2" height="13.6"/>
</g>
<use href="#tl-sk" x="153.7" y="999.2"/>
<use href="#tl-ex" x="177.7" y="999.2"/>
<use href="#tl-sk" x="201.7" y="999.2"/>
<use href="#tl-pl" x="225.7" y="999.2"/>
<use href="#tl-sk" x="249.7" y="999.2"/>
<use href="#tl-ho" x="273.7" y="999.2"/>
<use href="#tl-sk" x="297.7" y="999.2"/>
<use href="#tl-ex" x="321.7" y="999.2"/>
<use href="#tl-sk" x="345.7" y="999.2"/>
<use href="#tl-ex" x="369.7" y="999.2"/>
<use href="#tl-th" x="393.7" y="999.2"/>
<use href="#tl-sk" x="417.7" y="999.2"/>
<use href="#tl-ex" x="441.7" y="999.2"/>
<use href="#tl-sk" x="465.7" y="999.2"/>
<use href="#tl-ex" x="489.7" y="999.2"/>
<use href="#tl-sk" x="513.7" y="999.2"/>
<use href="#tl-ex" x="537.7" y="999.2"/>
<path d="M153.3 1016H539.3M154.3 1010.5V1016M178.3 1010.5V1016M202.3 1010.5V1016M226.3 1010.5V1016M250.3 1010.5V1016M274.3 1010.5V1016M298.3 1010.5V1016M322.3 1010.5V1016M346.3 1010.5V1016M370.3 1010.5V1016M394.3 1010.5V1016M418.3 1010.5V1016M442.3 1010.5V1016M466.3 1010.5V1016M490.3 1010.5V1016M514.3 1010.5V1016M538.3 1010.5V1016" stroke="#cacaca" stroke-width="2" fill="none"/>
<path d="M171.5 986.7L175 982.5M176.5 986.7L180 982.5M181.5 986.7L185 982.5" stroke="#333" stroke-width="1.7" stroke-linecap="round"/>
<path d="M543.8 985.2H556.2V987.5L550.8 994.5V1016.3H549.2V994.5L543.8 987.5z" fill="#4a4a4a"/>
<g transform="translate(1898.8,1000)" fill="#8a8a8a"><circle r="5.8"/><rect x="-1.8" y="-8.2" width="3.6" height="16.4" rx=".6"/><rect x="-1.8" y="-8.2" width="3.6" height="16.4" rx=".6" transform="rotate(45)"/><rect x="-1.8" y="-8.2" width="3.6" height="16.4" rx=".6" transform="rotate(90)"/><rect x="-1.8" y="-8.2" width="3.6" height="16.4" rx=".6" transform="rotate(135)"/><circle r="2.6" fill="#f2f2f2"/></g>
<g id="nav">
<g stroke="#222" stroke-width="1" fill="none"><path d="M666.9 950V965.5M664.8 952.5L666.9 949.8L669 952.5" /><path d="M666.9 954.2Q674.5 955 674.5 958.2Q674.5 961.5 666.5 961.8Q662 961.8 660.5 960.5"/><path d="M663 958.5L660 960.6L663.3 962.8"/></g>
<rect x="665.9" y="951" width="2" height="14" fill="#f2f2f2" stroke="#222" stroke-width=".8"/>
<use href="#ddarrow" x="680.5" y="955.8"/>
<path d="M692.5 955.5H707.5V965.5H692.5z" fill="#f4f4f4" stroke="#333" stroke-width="1"/><path d="M694 955.5L697.8 950.8L700 952.8L704 950.8L705 955.5" fill="#8e8e8e" stroke="#444" stroke-width=".8"/><rect x="695.2" y="959" width="9.6" height="3.6" fill="#bcc4d4" stroke="#333" stroke-width=".9"/>
<path d="M724.2 965.6L719.7 959.6Q717.6 957.3 718.6 956.6Q719.8 956 722.2 958.8L721.3 952.6Q721.9 951 723 952.3L724.3 956.3L724.4 951Q725.4 949.4 726.6 950.8L727 956L728.2 951.2Q729.4 950 730.2 951.6L729.9 956.6L731.6 953.6Q732.8 952.7 733.3 954.2L732 960.5Q731.6 963.5 729.9 965.6z" fill="#eef0f3" stroke="#333" stroke-width="1.1" stroke-linejoin="round"/>
<circle cx="749.3" cy="956" r="4.7" fill="#e6f0f0" stroke="#333" stroke-width="1.1"/><path d="M752.8 959.5L756.5 963.3" stroke="#333" stroke-width="2.2" stroke-linecap="round"/><path d="M755 952.5H760M757.5 950V955M755 956.7H760" stroke="#222" stroke-width="1"/>
<rect x="770.5" y="950.3" width="15" height="15" fill="none" stroke="#333" stroke-width=".9" stroke-dasharray="2 1.5"/><circle cx="777" cy="956.3" r="5.8" fill="#e6f0f0" stroke="#333" stroke-width="1.1"/><path d="M781.3 960.8L785 964.5" stroke="#333" stroke-width="2.4" stroke-linecap="round"/>
<use href="#ddarrow" x="791.3" y="955.8"/>
<rect x="803.5" y="950.5" width="15" height="11.5" rx="1" fill="#e8e8e8" stroke="#333" stroke-width="1"/><rect x="805.5" y="952.5" width="11" height="7.5" fill="#9cb8e4" stroke="#3a5a9a" stroke-width=".7"/><path d="M808 964.8H814L812.5 962H809.5z" fill="#aaa" stroke="#555" stroke-width=".6"/>
<use href="#ddarrow" x="821.6" y="955.8"/>
<rect x="834.2" y="950.3" width="15.4" height="15.4" fill="#f4f4f4"/><path d="M834.2 950.3H849.6V965.7H834.2zM838 950.3V965.7M841.9 950.3V965.7M845.8 950.3V965.7M834.2 954.1H849.6M834.2 958H849.6M834.2 961.9H849.6" stroke="#444" stroke-width="1" fill="none"/><rect x="834.2" y="958" width="15.4" height="7.7" fill="#667" opacity=".25"/>
<use href="#ddarrow" x="852.5" y="955.8"/>
<g fill="#a8bce8" stroke="#2a4a9a" stroke-width="1.1"><rect x="865.3" y="951.8" width="6" height="5" rx=".6"/><rect x="873.3" y="951.8" width="6" height="5" rx=".6"/><rect x="865.3" y="958.8" width="6" height="5" rx=".6"/><rect x="873.3" y="958.8" width="6" height="5" rx=".6"/></g>
<use href="#ddarrow" x="883.7" y="955.8"/>
</g>
</svg>
</body></html>
